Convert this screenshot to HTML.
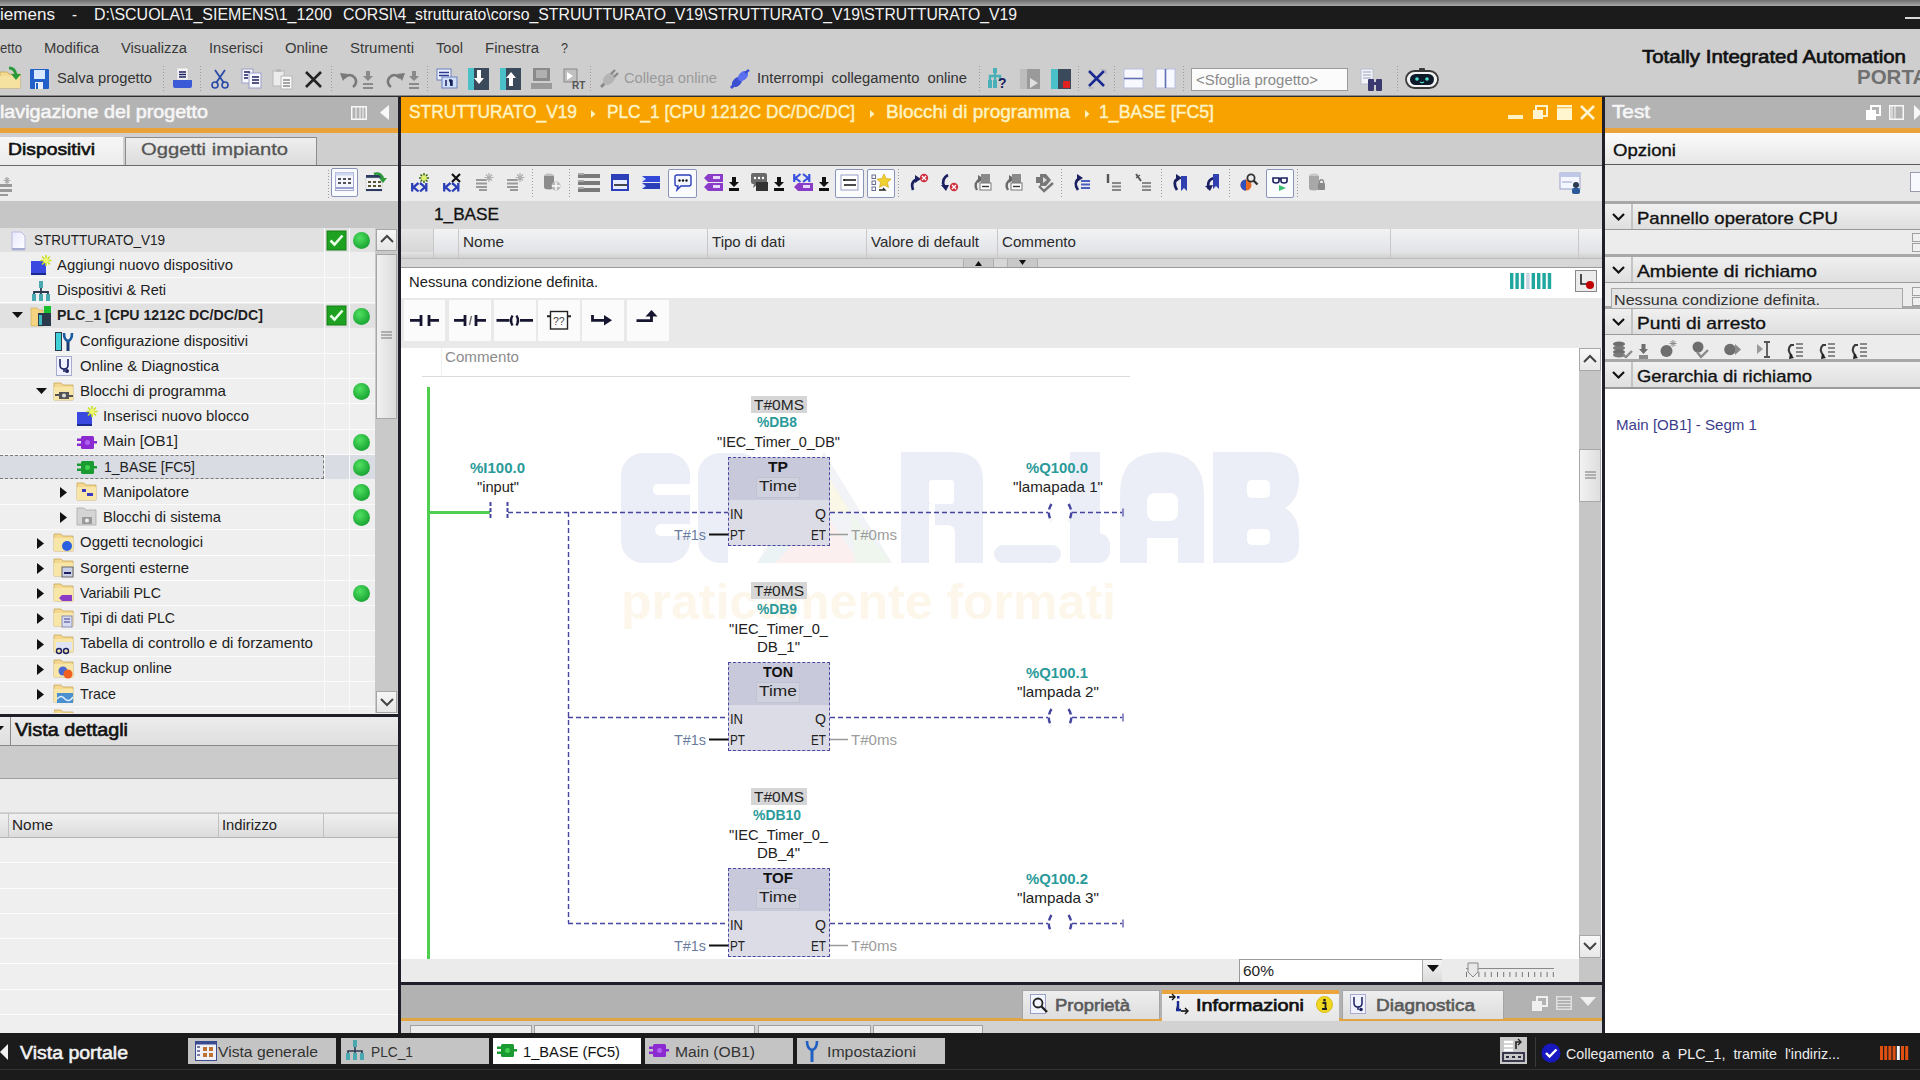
<!DOCTYPE html>
<html><head><meta charset="utf-8">
<style>
*{margin:0;padding:0;box-sizing:border-box}
html,body{width:1920px;height:1080px;overflow:hidden;background:#d4d4d4;font-family:"Liberation Sans",sans-serif;position:relative}
.a{position:absolute}
.t{position:absolute;white-space:pre;line-height:1;transform-origin:0 0}
svg.a{overflow:visible}
</style></head><body>
<div class="a" style="left:0px;top:0px;width:1920px;height:6px;background:linear-gradient(#6e6e6e,#a9a9a9);"></div>
<div class="a" style="left:0px;top:6px;width:1920px;height:23px;background:#1b1b1b;"></div>
<div class="t" style="left:0.00px;transform:scaleX(1.0165);top:7.28px;font-size:16.8px;color:#f2f2f2;">iemens</div>
<div class="t" style="left:72.00px;transform:scaleX(0.8939);top:7.28px;font-size:16.8px;color:#f2f2f2;">-</div>
<div class="t" style="left:94.00px;transform:scaleX(0.9521);top:7.28px;font-size:16.8px;color:#f2f2f2;">D:\SCUOLA\1_SIEMENS\1_1200</div>
<div class="t" style="left:343.00px;transform:scaleX(0.9431);top:7.28px;font-size:16.8px;color:#f2f2f2;">CORSI\4_strutturato\corso_STRUUTTURATO_V19</div>
<div class="t" style="left:703.00px;transform:scaleX(0.9388);top:7.28px;font-size:16.8px;color:#f2f2f2;">\STRUTTURATO_V19\STRUTTURATO_V19</div>
<div class="a" style="left:1905px;top:17px;width:15px;height:2px;background:#d8d8d8;"></div>
<div class="a" style="left:0px;top:29px;width:1920px;height:67px;background:#cecece;"></div>
<div class="a" style="left:0px;top:95px;width:1920px;height:1px;background:#8a8a8a;"></div>
<div class="a" style="left:0px;top:96px;width:1920px;height:1px;background:#2e2e2e;"></div>
<div class="t" style="left:0.00px;transform:scaleX(0.8508);top:40.38px;font-size:15.5px;color:#3a3a3a;">etto</div>
<div class="t" style="left:44.00px;transform:scaleX(0.9529);top:40.38px;font-size:15.5px;color:#3a3a3a;">Modifica</div>
<div class="t" style="left:121.00px;transform:scaleX(0.9494);top:40.38px;font-size:15.5px;color:#3a3a3a;">Visualizza</div>
<div class="t" style="left:209.00px;transform:scaleX(0.9497);top:40.38px;font-size:15.5px;color:#3a3a3a;">Inserisci</div>
<div class="t" style="left:285.00px;transform:scaleX(0.9596);top:40.38px;font-size:15.5px;color:#3a3a3a;">Online</div>
<div class="t" style="left:350.00px;transform:scaleX(0.9647);top:40.38px;font-size:15.5px;color:#3a3a3a;">Strumenti</div>
<div class="t" style="left:436.00px;transform:scaleX(0.9495);top:40.38px;font-size:15.5px;color:#3a3a3a;">Tool</div>
<div class="t" style="left:485.00px;transform:scaleX(0.9643);top:40.38px;font-size:15.5px;color:#3a3a3a;">Finestra</div>
<div class="t" style="left:561.00px;transform:scaleX(0.8116);top:40.38px;font-size:15.5px;color:#3a3a3a;">?</div>
<div class="t" style="left:1642.00px;transform:scaleX(1.1064);top:47.84px;font-size:18.5px;color:#111;-webkit-text-stroke:0.65px #111;">Totally Integrated Automation</div>
<div class="t" style="left:1857px;top:67.15px;font-size:20.5px;color:#707070;font-weight:bold;">PORTAL</div>
<div class="t" style="left:57.00px;transform:scaleX(0.9503);top:70.38px;font-size:15.5px;color:#333;">Salva progetto</div>
<div class="t" style="left:624.00px;transform:scaleX(0.9466);top:70.38px;font-size:15.5px;color:#9a9a9a;">Collega online</div>
<div class="t" style="left:757.00px;transform:scaleX(0.9520);top:70.38px;font-size:15.5px;color:#333;">Interrompi  collegamento  online</div>
<div class="a" style="left:1191px;top:68px;width:157px;height:23px;background:#fbfbfb;border:1px solid #9a9a9a"></div>
<div class="t" style="left:1196.00px;transform:scaleX(1.0294);top:72.73px;font-size:14.5px;color:#8a8a8a;">&lt;Sfoglia progetto&gt;</div>
<div class="a" style="left:163px;top:66px;width:1px;height:27px;background:repeating-linear-gradient(#9c9c9c 0 1px,transparent 1px 3px);"></div>
<div class="a" style="left:200px;top:66px;width:1px;height:27px;background:repeating-linear-gradient(#9c9c9c 0 1px,transparent 1px 3px);"></div>
<div class="a" style="left:331px;top:66px;width:1px;height:27px;background:repeating-linear-gradient(#9c9c9c 0 1px,transparent 1px 3px);"></div>
<div class="a" style="left:427px;top:66px;width:1px;height:27px;background:repeating-linear-gradient(#9c9c9c 0 1px,transparent 1px 3px);"></div>
<div class="a" style="left:590px;top:66px;width:1px;height:27px;background:repeating-linear-gradient(#9c9c9c 0 1px,transparent 1px 3px);"></div>
<div class="a" style="left:979px;top:66px;width:1px;height:27px;background:repeating-linear-gradient(#9c9c9c 0 1px,transparent 1px 3px);"></div>
<div class="a" style="left:1078px;top:66px;width:1px;height:27px;background:repeating-linear-gradient(#9c9c9c 0 1px,transparent 1px 3px);"></div>
<div class="a" style="left:1114px;top:66px;width:1px;height:27px;background:repeating-linear-gradient(#9c9c9c 0 1px,transparent 1px 3px);"></div>
<div class="a" style="left:1183px;top:66px;width:1px;height:27px;background:repeating-linear-gradient(#9c9c9c 0 1px,transparent 1px 3px);"></div>
<div class="a" style="left:1397px;top:66px;width:1px;height:27px;background:repeating-linear-gradient(#9c9c9c 0 1px,transparent 1px 3px);"></div>
<div class="a" style="left:0px;top:97px;width:398px;height:31px;background:#b3b3b3;"></div>
<div class="t" style="left:0.00px;transform:scaleX(1.0644);top:103.34px;font-size:18.5px;color:#f6f6f6;-webkit-text-stroke:0.6px #f6f6f6;">lavigazione del progetto</div>
<div class="a" style="left:0px;top:128px;width:398px;height:5px;background:#e9a33a;"></div>
<div class="a" style="left:0px;top:133px;width:398px;height:32px;background:#cfcfcf;"></div>
<div class="a" style="left:0px;top:137px;width:123px;height:29px;background:linear-gradient(#f6f6f6,#ececec);"></div>
<div class="t" style="left:8.00px;transform:scaleX(1.1368);top:141.11px;font-size:17px;color:#111;-webkit-text-stroke:0.6px #111;">Dispositivi</div>
<div class="a" style="left:125px;top:137px;width:192px;height:28px;background:linear-gradient(#eeeeee,#dcdcdc);border:1px solid #8c8c8c;border-bottom:none"></div>
<div class="t" style="left:141.00px;transform:scaleX(1.1874);top:141.11px;font-size:17px;color:#555;-webkit-text-stroke:0.3px #555;">Oggetti impianto</div>
<div class="a" style="left:0px;top:165px;width:398px;height:1px;background:#6a6a6a;"></div>
<div class="a" style="left:0px;top:166px;width:398px;height:35px;background:#ececec;"></div>
<div class="a" style="left:0px;top:201px;width:398px;height:27px;background:#c6c6c6;"></div>
<div class="a" style="left:0px;top:228px;width:398px;height:486px;background:#efefef;"></div>
<div class="a" style="left:0px;top:228px;width:375px;height:24px;background:#e1e1e1;"></div>
<div class="t" style="left:34.00px;transform:scaleX(0.9326);top:232.73px;font-size:14.5px;color:#1e1e1e;">STRUTTURATO_V19</div>
<div class="a" style="left:0px;top:277px;width:375px;height:1px;background:#fbfbfb;"></div>
<div class="t" style="left:57.00px;transform:scaleX(1.0250);top:257.95px;font-size:14.5px;color:#1e1e1e;">Aggiungi nuovo dispositivo</div>
<div class="a" style="left:0px;top:302px;width:375px;height:1px;background:#fbfbfb;"></div>
<div class="t" style="left:57.00px;transform:scaleX(1.0020);top:283.17px;font-size:14.5px;color:#1e1e1e;">Dispositivi &amp; Reti</div>
<div class="a" style="left:0px;top:304px;width:375px;height:24px;background:#e1e1e1;"></div>
<div class="t" style="left:57.00px;transform:scaleX(0.9758);top:308.39px;font-size:14.5px;color:#1e1e1e;font-weight:bold;">PLC_1 [CPU 1212C DC/DC/DC]</div>
<div class="a" style="left:0px;top:353px;width:375px;height:1px;background:#fbfbfb;"></div>
<div class="t" style="left:80.00px;transform:scaleX(1.0218);top:333.61px;font-size:14.5px;color:#1e1e1e;">Configurazione dispositivi</div>
<div class="a" style="left:0px;top:378px;width:375px;height:1px;background:#fbfbfb;"></div>
<div class="t" style="left:80.00px;transform:scaleX(1.0264);top:358.83px;font-size:14.5px;color:#1e1e1e;">Online &amp; Diagnostica</div>
<div class="a" style="left:0px;top:403px;width:375px;height:1px;background:#fbfbfb;"></div>
<div class="t" style="left:80.00px;transform:scaleX(1.0411);top:384.05px;font-size:14.5px;color:#1e1e1e;">Blocchi di programma</div>
<div class="a" style="left:0px;top:429px;width:375px;height:1px;background:#fbfbfb;"></div>
<div class="t" style="left:103.00px;transform:scaleX(1.0233);top:409.27px;font-size:14.5px;color:#1e1e1e;">Inserisci nuovo blocco</div>
<div class="a" style="left:0px;top:454px;width:375px;height:1px;background:#fbfbfb;"></div>
<div class="t" style="left:103.00px;transform:scaleX(1.0340);top:434.49px;font-size:14.5px;color:#1e1e1e;">Main [OB1]</div>
<div class="a" style="left:0px;top:455px;width:375px;height:24px;background:#d9dce2;"></div>
<div class="a" style="left:0px;top:455px;width:324px;height:24px;background:transparent;border:1px dashed #7a7a7a;border-left:none"></div>
<div class="t" style="left:104.00px;transform:scaleX(0.9650);top:459.71px;font-size:14.5px;color:#1e1e1e;">1_BASE [FC5]</div>
<div class="a" style="left:0px;top:504px;width:375px;height:1px;background:#fbfbfb;"></div>
<div class="t" style="left:103.00px;transform:scaleX(1.0259);top:484.93px;font-size:14.5px;color:#1e1e1e;">Manipolatore</div>
<div class="a" style="left:0px;top:529px;width:375px;height:1px;background:#fbfbfb;"></div>
<div class="t" style="left:103.00px;transform:scaleX(1.0168);top:510.15px;font-size:14.5px;color:#1e1e1e;">Blocchi di sistema</div>
<div class="a" style="left:0px;top:555px;width:375px;height:1px;background:#fbfbfb;"></div>
<div class="t" style="left:80.00px;transform:scaleX(1.0310);top:535.37px;font-size:14.5px;color:#1e1e1e;">Oggetti tecnologici</div>
<div class="a" style="left:0px;top:580px;width:375px;height:1px;background:#fbfbfb;"></div>
<div class="t" style="left:80.00px;transform:scaleX(1.0244);top:560.59px;font-size:14.5px;color:#1e1e1e;">Sorgenti esterne</div>
<div class="a" style="left:0px;top:605px;width:375px;height:1px;background:#fbfbfb;"></div>
<div class="t" style="left:80.00px;transform:scaleX(0.9789);top:585.81px;font-size:14.5px;color:#1e1e1e;">Variabili PLC</div>
<div class="a" style="left:0px;top:630px;width:375px;height:1px;background:#fbfbfb;"></div>
<div class="t" style="left:80.00px;transform:scaleX(0.9714);top:611.03px;font-size:14.5px;color:#1e1e1e;">Tipi di dati PLC</div>
<div class="a" style="left:0px;top:656px;width:375px;height:1px;background:#fbfbfb;"></div>
<div class="t" style="left:80.00px;transform:scaleX(1.0398);top:636.25px;font-size:14.5px;color:#1e1e1e;">Tabella di controllo e di forzamento</div>
<div class="a" style="left:0px;top:681px;width:375px;height:1px;background:#fbfbfb;"></div>
<div class="t" style="left:80.00px;transform:scaleX(1.0099);top:661.47px;font-size:14.5px;color:#1e1e1e;">Backup online</div>
<div class="a" style="left:0px;top:706px;width:375px;height:1px;background:#fbfbfb;"></div>
<div class="t" style="left:80.00px;transform:scaleX(0.9855);top:686.69px;font-size:14.5px;color:#1e1e1e;">Trace</div>
<div class="a" style="left:0px;top:731px;width:375px;height:1px;background:#fbfbfb;"></div>
<div class="a" style="left:324px;top:228px;width:1px;height:485px;background:#fafafa;"></div>
<div class="a" style="left:349px;top:228px;width:1px;height:485px;background:#fafafa;"></div>
<div class="a" style="left:0px;top:711px;width:375px;height:2px;background:#efefef;"></div>
<div class="a" style="left:375px;top:228px;width:23px;height:485px;background:#c9c9c9;"></div>
<div class="a" style="left:376px;top:229px;width:21px;height:22px;background:linear-gradient(#f6f6f6,#e6e6e6);border:1px solid #a6a6a6"></div>
<div class="a" style="left:376px;top:254px;width:21px;height:165px;background:linear-gradient(90deg,#f0f0f0,#dcdcdc);border:1px solid #a6a6a6"></div>
<div class="a" style="left:376px;top:691px;width:21px;height:22px;background:linear-gradient(#f6f6f6,#e6e6e6);border:1px solid #a6a6a6"></div>
<div class="a" style="left:0px;top:714px;width:398px;height:3px;background:#1f1f2a;"></div>
<div class="a" style="left:0px;top:717px;width:398px;height:29px;background:linear-gradient(#ececec,#dedede);"></div>
<div class="a" style="left:10px;top:717px;width:1px;height:28px;background:#8a8a8a;"></div>
<svg class="a" style="left:0px;top:726px;" width="4" height="5" viewBox="0 0 4 5"><path d="M-3 0 h7 l-3.5 4 Z" fill="#111"/></svg>
<div class="t" style="left:15.00px;transform:scaleX(1.1312);top:722.19px;font-size:17.5px;color:#111;-webkit-text-stroke:0.6px #111;">Vista dettagli</div>
<div class="a" style="left:0px;top:745px;width:398px;height:1px;background:#8a8a8a;"></div>
<div class="a" style="left:0px;top:746px;width:398px;height:33px;background:#cbcbcb;"></div>
<div class="a" style="left:0px;top:778px;width:398px;height:1px;background:#a0a0a0;"></div>
<div class="a" style="left:0px;top:779px;width:398px;height:33px;background:#ececec;"></div>
<div class="a" style="left:0px;top:813px;width:398px;height:25px;background:linear-gradient(#f0f0f0,#dcdcdc);border-top:1px solid #c8c8c8;border-bottom:1px solid #b4b4b4"></div>
<div class="a" style="left:8px;top:813px;width:1px;height:25px;background:#c0c0c0;"></div>
<div class="a" style="left:218px;top:813px;width:1px;height:25px;background:#c0c0c0;"></div>
<div class="a" style="left:323px;top:813px;width:1px;height:25px;background:#c0c0c0;"></div>
<div class="t" style="left:12.00px;transform:scaleX(1.0598);top:818.23px;font-size:14.5px;color:#222;">Nome</div>
<div class="t" style="left:222.00px;transform:scaleX(1.0185);top:818.23px;font-size:14.5px;color:#222;">Indirizzo</div>
<div class="a" style="left:0px;top:838px;width:398px;height:195px;background:#efefef;"></div>
<div class="a" style="left:0px;top:862px;width:398px;height:1px;background:#fbfbfb;"></div>
<div class="a" style="left:0px;top:888px;width:398px;height:1px;background:#fbfbfb;"></div>
<div class="a" style="left:0px;top:913px;width:398px;height:1px;background:#fbfbfb;"></div>
<div class="a" style="left:0px;top:938px;width:398px;height:1px;background:#fbfbfb;"></div>
<div class="a" style="left:0px;top:963px;width:398px;height:1px;background:#fbfbfb;"></div>
<div class="a" style="left:0px;top:989px;width:398px;height:1px;background:#fbfbfb;"></div>
<div class="a" style="left:0px;top:1014px;width:398px;height:1px;background:#fbfbfb;"></div>
<div class="a" style="left:398px;top:97px;width:3px;height:936px;background:#1f1f2a;"></div>
<div class="a" style="left:401px;top:97px;width:1201px;height:36px;background:#f8a200;"></div>
<div class="a" style="left:401px;top:133px;width:1201px;height:32px;background:#cdcdcd;"></div>
<div class="a" style="left:401px;top:165px;width:1201px;height:1px;background:#6a6a6a;"></div>
<div class="a" style="left:401px;top:166px;width:1201px;height:35px;background:#ececec;"></div>
<div class="a" style="left:401px;top:201px;width:1201px;height:28px;background:#d9d9d9;"></div>
<div class="t" style="left:434.00px;transform:scaleX(1.0421);top:206.03px;font-size:16.5px;color:#111;-webkit-text-stroke:0.3px #111;">1_BASE</div>
<div class="a" style="left:401px;top:229px;width:1201px;height:23px;background:linear-gradient(#f2f3f5,#e1e3e6);"></div>
<div class="a" style="left:401px;top:229px;width:32px;height:29px;background:linear-gradient(#e6e6e6,#d2d2d2);"></div>
<div class="a" style="left:401px;top:252px;width:1201px;height:6px;background:linear-gradient(#e4e4e4,#d0d0d0);"></div>
<div class="a" style="left:433px;top:229px;width:1px;height:29px;background:#c8c8c8;"></div>
<div class="a" style="left:458px;top:229px;width:1px;height:29px;background:#c8c8c8;"></div>
<div class="a" style="left:707px;top:229px;width:1px;height:29px;background:#c8c8c8;"></div>
<div class="a" style="left:866px;top:229px;width:1px;height:29px;background:#c8c8c8;"></div>
<div class="a" style="left:997px;top:229px;width:1px;height:29px;background:#c8c8c8;"></div>
<div class="a" style="left:1390px;top:229px;width:1px;height:29px;background:#c8c8c8;"></div>
<div class="a" style="left:1578px;top:229px;width:1px;height:29px;background:#c8c8c8;"></div>
<div class="t" style="left:463.00px;transform:scaleX(1.0598);top:234.73px;font-size:14.5px;color:#2a2a2a;">Nome</div>
<div class="t" style="left:712.00px;transform:scaleX(1.0371);top:234.73px;font-size:14.5px;color:#2a2a2a;">Tipo di dati</div>
<div class="t" style="left:871.00px;transform:scaleX(1.0413);top:234.73px;font-size:14.5px;color:#2a2a2a;">Valore di default</div>
<div class="t" style="left:1002.00px;transform:scaleX(1.0434);top:234.73px;font-size:14.5px;color:#2a2a2a;">Commento</div>
<div class="a" style="left:401px;top:258px;width:1201px;height:9px;background:#d7d7d7;border-top:1px solid #bcbcbc"></div>
<div class="a" style="left:963px;top:259px;width:31px;height:8px;background:#c8c8c8;border-left:1px solid #b0b0b0;border-right:1px solid #b0b0b0"></div>
<div class="a" style="left:1007px;top:259px;width:31px;height:8px;background:#c8c8c8;border-left:1px solid #b0b0b0;border-right:1px solid #b0b0b0"></div>
<svg class="a" style="left:975px;top:261px;" width="7" height="5" viewBox="0 0 7 5"><path d="M0 5 L3.5 0 L7 5 Z" fill="#111"/></svg>
<svg class="a" style="left:1019px;top:260px;" width="7" height="5" viewBox="0 0 7 5"><path d="M0 0 L3.5 5 L7 0 Z" fill="#111"/></svg>
<div class="a" style="left:401px;top:267px;width:1201px;height:1px;background:#9a9a9a;"></div>
<div class="a" style="left:401px;top:268px;width:1201px;height:30px;background:#ffffff;"></div>
<div class="t" style="left:409.00px;transform:scaleX(1.0194);top:274.73px;font-size:14.5px;color:#222;">Nessuna condizione definita.</div>
<div class="a" style="left:401px;top:298px;width:1201px;height:50px;background:#e9e9e9;"></div>
<div class="a" style="left:404px;top:300px;width:41px;height:41px;background:#fbfbfb;"></div>
<div class="a" style="left:449px;top:300px;width:42px;height:41px;background:#fbfbfb;"></div>
<div class="a" style="left:494px;top:300px;width:42px;height:41px;background:#fbfbfb;"></div>
<div class="a" style="left:538px;top:300px;width:42px;height:41px;background:#fbfbfb;"></div>
<div class="a" style="left:582px;top:300px;width:42px;height:41px;background:#fbfbfb;"></div>
<div class="a" style="left:627px;top:300px;width:42px;height:41px;background:#fbfbfb;"></div>
<div class="a" style="left:401px;top:348px;width:1201px;height:611px;background:#ffffff;"></div>
<div class="a" style="left:1579px;top:348px;width:22px;height:611px;background:#c6c6c6;"></div>
<div class="a" style="left:1579px;top:348px;width:22px;height:23px;background:linear-gradient(#f8f8f8,#e8e8e8);border:1px solid #a8a8a8"></div>
<div class="a" style="left:1579px;top:449px;width:22px;height:53px;background:linear-gradient(90deg,#f2f2f2,#dedede);border:1px solid #a8a8a8"></div>
<div class="a" style="left:1579px;top:935px;width:22px;height:23px;background:linear-gradient(#f8f8f8,#e8e8e8);border:1px solid #a8a8a8"></div>
<div class="a" style="left:401px;top:959px;width:1178px;height:23px;background:#ebebeb;"></div>
<div class="a" style="left:1579px;top:959px;width:22px;height:23px;background:#c6c6c6;"></div>
<div class="a" style="left:1239px;top:959px;width:203px;height:23px;background:#ffffff;border:1px solid #9a9a9a;border-bottom:none"></div>
<div class="t" style="left:1243.00px;transform:scaleX(1.0678);top:963.73px;font-size:14.5px;color:#222;">60%</div>
<div class="a" style="left:1422px;top:960px;width:20px;height:22px;background:linear-gradient(#f4f4f4,#dadada);border-left:1px solid #a8a8a8"></div>
<div class="a" style="left:401px;top:982px;width:1201px;height:3px;background:#1f1f2a;"></div>
<div class="a" style="left:401px;top:985px;width:1201px;height:33px;background:#b2b2b2;"></div>
<div class="a" style="left:401px;top:1018px;width:1201px;height:3px;background:#e1a443;"></div>
<div class="a" style="left:401px;top:1021px;width:1201px;height:12px;background:#d2d2d2;"></div>
<div class="a" style="left:410px;top:1025px;width:122px;height:8px;background:#ececec;border:1px solid #a0a0a0;border-bottom:none"></div>
<div class="a" style="left:534px;top:1025px;width:221px;height:8px;background:#ececec;border:1px solid #a0a0a0;border-bottom:none"></div>
<div class="a" style="left:758px;top:1025px;width:113px;height:8px;background:#ececec;border:1px solid #a0a0a0;border-bottom:none"></div>
<div class="a" style="left:873px;top:1025px;width:110px;height:8px;background:#ececec;border:1px solid #a0a0a0;border-bottom:none"></div>
<div class="a" style="left:1022px;top:990px;width:138px;height:29px;background:linear-gradient(#eeeeee,#dddddd);border:1px solid #a4a4a4;border-bottom:none"></div>
<div class="a" style="left:1162px;top:990px;width:177px;height:31px;background:linear-gradient(#f2f2f2,#e6e6e6);border-top:4px solid #e9a43e"></div>
<div class="a" style="left:1342px;top:990px;width:162px;height:29px;background:linear-gradient(#eeeeee,#dddddd);border:1px solid #a4a4a4;border-bottom:none"></div>
<div class="t" style="left:1055.00px;transform:scaleX(1.0872);top:996.61px;font-size:17px;color:#5a5a5a;-webkit-text-stroke:0.6px #5a5a5a;">Proprietà</div>
<div class="t" style="left:1196.00px;transform:scaleX(1.1662);top:996.61px;font-size:17px;color:#111;-webkit-text-stroke:0.7px #111;">Informazioni</div>
<div class="t" style="left:1376.00px;transform:scaleX(1.1145);top:996.61px;font-size:17px;color:#5a5a5a;-webkit-text-stroke:0.6px #5a5a5a;">Diagnostica</div>
<div class="a" style="left:1602px;top:97px;width:3px;height:936px;background:#1f1f2a;"></div>
<div class="t" style="left:409.00px;transform:scaleX(0.9374);top:103.34px;font-size:18.5px;color:#fff3c4;-webkit-text-stroke:0.45px #fff3c4;">STRUTTURATO_V19</div>
<div class="t" style="left:607.00px;transform:scaleX(0.9313);top:103.34px;font-size:18.5px;color:#fff3c4;-webkit-text-stroke:0.45px #fff3c4;">PLC_1 [CPU 1212C DC/DC/DC]</div>
<div class="t" style="left:886.00px;transform:scaleX(1.0285);top:103.34px;font-size:18.5px;color:#fff3c4;-webkit-text-stroke:0.45px #fff3c4;">Blocchi di programma</div>
<div class="t" style="left:1099.00px;transform:scaleX(0.9558);top:103.34px;font-size:18.5px;color:#fff3c4;-webkit-text-stroke:0.45px #fff3c4;">1_BASE [FC5]</div>
<svg class="a" style="left:591px;top:110px;" width="5" height="8" viewBox="0 0 5 8"><path d="M0 0 L4.5 4 L0 8 Z" fill="#fff3c4"/></svg>
<svg class="a" style="left:870px;top:110px;" width="5" height="8" viewBox="0 0 5 8"><path d="M0 0 L4.5 4 L0 8 Z" fill="#fff3c4"/></svg>
<svg class="a" style="left:1085px;top:110px;" width="5" height="8" viewBox="0 0 5 8"><path d="M0 0 L4.5 4 L0 8 Z" fill="#fff3c4"/></svg>
<div class="a" style="left:1508px;top:115px;width:15px;height:4px;background:#fff3c4;"></div>
<svg class="a" style="left:1532px;top:105px;" width="16" height="15" viewBox="0 0 16 15"><rect x="4" y="1" width="11" height="10" fill="none" stroke="#fff4cf" stroke-width="2"/><rect x="1" y="5" width="10" height="9" fill="#fff4cf"/></svg>
<svg class="a" style="left:1557px;top:105px;" width="15" height="15" viewBox="0 0 15 15"><rect x="0" y="0" width="15" height="15" fill="#fff6d0"/><rect x="0" y="2" width="15" height="1.3" fill="#f8a200" opacity="0.6"/></svg>
<svg class="a" style="left:1580px;top:105px;" width="15" height="15" viewBox="0 0 15 15"><path d="M1 1 L14 14 M14 1 L1 14" stroke="#fff4cf" stroke-width="2.6"/></svg>
<div class="a" style="left:441px;top:348px;width:1px;height:28px;background:#f0f0f0;"></div>
<div class="t" style="left:445.00px;transform:scaleX(1.0808);top:350.15px;font-size:14px;color:#8c8c8c;">Commento</div>
<div class="a" style="left:422px;top:376px;width:708px;height:1px;background:#dcdcdc;"></div>
<svg class="a" style="left:0;top:0" width="1920" height="1080"><rect x="621" y="453" width="69" height="110" rx="22" fill="#ebeef6"/><rect x="653" y="484" width="40" height="11" rx="5" fill="#ffffff"/><rect x="655" y="524" width="38" height="12" rx="6" fill="#ffffff"/><rect x="698" y="453" width="64" height="110" rx="22" fill="#ebeef6"/><rect x="728" y="484" width="36" height="11" rx="5" fill="#ffffff"/><rect x="728" y="520" width="36" height="45" rx="0" fill="#ffffff"/><path d="M824 452 L892 563 L757 563 Z" fill="#f1f3f6"/><path d="M824 470 L850 512 L798 512 Z" fill="#fbf7e6"/><path d="M798 512 L824 512 L780 563 L757 563 Z" fill="#ebf3f5"/><path d="M775 563 L824 512 L860 563 Z" fill="#fbeff0"/><path d="M850 512 L892 563 L855 563 Z" fill="#eef6ee"/><path d="M901 452 H952 Q983 452 983 480 V563 H901 Z" fill="#ebeef6"/><rect x="929" y="480" width="25" height="24" rx="3" fill="#ffffff"/><rect x="929" y="504" width="6" height="60" rx="0" fill="#ffffff"/><path d="M929 525 H947 Q955 525 955 533 V564 H929 Z" fill="#ffffff"/><rect x="994" y="545" width="67" height="18" rx="9" fill="#ebeef6"/><rect x="1070" y="452" width="30" height="111" rx="0" fill="#ebeef6"/><rect x="1070" y="533" width="40" height="30" rx="12" fill="#ebeef6"/><path d="M1120 563 L1120 494 Q1120 452 1162 452 Q1204 452 1204 494 L1204 563 Z" fill="#ebeef6"/><rect x="1147" y="493" width="31" height="28" rx="8" fill="#ffffff"/><rect x="1147" y="538" width="31" height="26" rx="0" fill="#ffffff"/><path d="M1213 452 h55 q31 0 31 28 q0 20 -14 28 q14 8 14 28 v10 q0 17 -20 17 h-66 Z" fill="#ebeef6"/><rect x="1247" y="480" width="23" height="18" rx="5" fill="#ffffff"/><rect x="1247" y="529" width="23" height="16" rx="5" fill="#ffffff"/></svg>
<div class="t" style="left:621.00px;transform:scaleX(1.0008);top:576.67px;font-size:50px;color:#fdf6ea;font-weight:bold;">praticamente formati</div>
<div class="a" style="left:427px;top:387px;width:3px;height:572px;background:#4fcf4f;"></div>
<div class="a" style="left:429px;top:511px;width:61px;height:3px;background:#4fcf4f;"></div>
<svg class="a" style="left:0;top:0" width="1920" height="1080"><line x1="490.5" y1="502" x2="490.5" y2="520" stroke="#4646a0" stroke-width="2" stroke-dasharray="4 2"/><line x1="507.5" y1="502" x2="507.5" y2="520" stroke="#4646a0" stroke-width="2" stroke-dasharray="4 2"/><line x1="508" y1="512.5" x2="728" y2="512.5" stroke="#4646a0" stroke-width="1.4" stroke-dasharray="5 3"/><line x1="568.5" y1="512" x2="568.5" y2="923" stroke="#4646a0" stroke-width="1.4" stroke-dasharray="5 3"/><line x1="568" y1="717.5" x2="728" y2="717.5" stroke="#4646a0" stroke-width="1.4" stroke-dasharray="5 3"/><line x1="568" y1="923.5" x2="728" y2="923.5" stroke="#4646a0" stroke-width="1.4" stroke-dasharray="5 3"/><line x1="830" y1="512.5" x2="1048" y2="512.5" stroke="#4646a0" stroke-width="1.4" stroke-dasharray="5 3"/><line x1="1072" y1="512.5" x2="1122" y2="512.5" stroke="#4646a0" stroke-width="1.4" stroke-dasharray="5 3"/><line x1="1123" y1="508.5" x2="1123" y2="516.5" stroke="#4646a0" stroke-width="1.2"/><path d="M1051.5 504.0 Q1046 512.5 1051.5 521.0" fill="none" stroke="#4646a0" stroke-width="2.4" stroke-dasharray="6 3"/><path d="M1068.5 504.0 Q1074 512.5 1068.5 521.0" fill="none" stroke="#4646a0" stroke-width="2.4" stroke-dasharray="6 3"/><line x1="709" y1="534.5" x2="728" y2="534.5" stroke="#111" stroke-width="2"/><line x1="830" y1="534.5" x2="848" y2="534.5" stroke="#9a9a9a" stroke-width="1.5"/><line x1="830" y1="717.5" x2="1048" y2="717.5" stroke="#4646a0" stroke-width="1.4" stroke-dasharray="5 3"/><line x1="1072" y1="717.5" x2="1122" y2="717.5" stroke="#4646a0" stroke-width="1.4" stroke-dasharray="5 3"/><line x1="1123" y1="713.5" x2="1123" y2="721.5" stroke="#4646a0" stroke-width="1.2"/><path d="M1051.5 709.0 Q1046 717.5 1051.5 726.0" fill="none" stroke="#4646a0" stroke-width="2.4" stroke-dasharray="6 3"/><path d="M1068.5 709.0 Q1074 717.5 1068.5 726.0" fill="none" stroke="#4646a0" stroke-width="2.4" stroke-dasharray="6 3"/><line x1="709" y1="739.5" x2="728" y2="739.5" stroke="#111" stroke-width="2"/><line x1="830" y1="739.5" x2="848" y2="739.5" stroke="#9a9a9a" stroke-width="1.5"/><line x1="830" y1="923.5" x2="1048" y2="923.5" stroke="#4646a0" stroke-width="1.4" stroke-dasharray="5 3"/><line x1="1072" y1="923.5" x2="1122" y2="923.5" stroke="#4646a0" stroke-width="1.4" stroke-dasharray="5 3"/><line x1="1123" y1="919.5" x2="1123" y2="927.5" stroke="#4646a0" stroke-width="1.2"/><path d="M1051.5 915.0 Q1046 923.5 1051.5 932.0" fill="none" stroke="#4646a0" stroke-width="2.4" stroke-dasharray="6 3"/><path d="M1068.5 915.0 Q1074 923.5 1068.5 932.0" fill="none" stroke="#4646a0" stroke-width="2.4" stroke-dasharray="6 3"/><line x1="709" y1="945.5" x2="728" y2="945.5" stroke="#111" stroke-width="2"/><line x1="830" y1="945.5" x2="848" y2="945.5" stroke="#9a9a9a" stroke-width="1.5"/></svg>
<div class="a" style="left:751px;top:396px;width:56px;height:17px;background:#d6d6d6;"></div>
<div class="t" style="left:754.00px;transform:scaleX(1.1080);top:397.85px;font-size:14px;color:#262626;">T#0MS</div>
<div class="t" style="left:757.00px;transform:scaleX(0.9545);top:415.03px;font-size:14.5px;color:#2a9a9a;font-weight:bold;">%DB8</div>
<div class="t" style="left:716.50px;transform:scaleX(0.9968);top:435.13px;font-size:14.5px;color:#222;">"IEC_Timer_0_DB"</div>
<div class="a" style="left:728px;top:457px;width:102px;height:89px;background:linear-gradient(#c8c9da 0 42px,#dcdce6 42px);border:1.5px dashed #4a4aa0"></div>
<div class="t" style="left:768.00px;transform:scaleX(1.0793);top:459.73px;font-size:14.5px;color:#111;font-weight:bold;">TP</div>
<div class="a" style="left:756px;top:477px;width:44px;height:21px;background:#d0d1de;border:1px solid #c2c3d2"></div>
<div class="t" style="left:759.00px;transform:scaleX(1.1992);top:479.23px;font-size:14.5px;color:#222;">Time</div>
<div class="t" style="left:730.00px;transform:scaleX(0.9286);top:506.65px;font-size:14px;color:#222;">IN</div>
<div class="t" style="left:730.00px;transform:scaleX(0.8384);top:527.65px;font-size:14px;color:#222;">PT</div>
<div class="t" style="left:815.00px;transform:scaleX(1.0100);top:506.65px;font-size:14px;color:#222;">Q</div>
<div class="t" style="left:811.00px;transform:scaleX(0.8384);top:527.65px;font-size:14px;color:#222;">ET</div>
<div class="t" style="left:674.00px;transform:scaleX(1.0281);top:527.65px;font-size:14px;color:#6a7ca0;">T#1s</div>
<div class="t" style="left:851.00px;transform:scaleX(1.0748);top:527.65px;font-size:14px;color:#9c9c9c;">T#0ms</div>
<div class="t" style="left:1026.00px;transform:scaleX(1.0253);top:461.43px;font-size:14.5px;color:#2a9a9a;font-weight:bold;">%Q100.0</div>
<div class="t" style="left:1013.00px;transform:scaleX(1.0456);top:480.33px;font-size:14.5px;color:#222;">"lamapada 1"</div>
<div class="a" style="left:751px;top:582px;width:56px;height:17px;background:#d6d6d6;"></div>
<div class="t" style="left:754.00px;transform:scaleX(1.1080);top:584.05px;font-size:14px;color:#262626;">T#0MS</div>
<div class="t" style="left:757.00px;transform:scaleX(0.9545);top:601.73px;font-size:14.5px;color:#2a9a9a;font-weight:bold;">%DB9</div>
<div class="t" style="left:728.50px;transform:scaleX(1.0092);top:622.23px;font-size:14.5px;color:#222;">"IEC_Timer_0_</div>
<div class="t" style="left:756.50px;transform:scaleX(1.0381);top:639.73px;font-size:14.5px;color:#222;">DB_1"</div>
<div class="a" style="left:728px;top:662px;width:102px;height:89px;background:linear-gradient(#c8c9da 0 42px,#dcdce6 42px);border:1.5px dashed #4a4aa0"></div>
<div class="t" style="left:763.00px;transform:scaleX(0.9882);top:664.73px;font-size:14.5px;color:#111;font-weight:bold;">TON</div>
<div class="a" style="left:756px;top:682px;width:44px;height:21px;background:#d0d1de;border:1px solid #c2c3d2"></div>
<div class="t" style="left:759.00px;transform:scaleX(1.1992);top:684.23px;font-size:14.5px;color:#222;">Time</div>
<div class="t" style="left:730.00px;transform:scaleX(0.9286);top:711.65px;font-size:14px;color:#222;">IN</div>
<div class="t" style="left:730.00px;transform:scaleX(0.8384);top:732.65px;font-size:14px;color:#222;">PT</div>
<div class="t" style="left:815.00px;transform:scaleX(1.0100);top:711.65px;font-size:14px;color:#222;">Q</div>
<div class="t" style="left:811.00px;transform:scaleX(0.8384);top:732.65px;font-size:14px;color:#222;">ET</div>
<div class="t" style="left:674.00px;transform:scaleX(1.0281);top:732.65px;font-size:14px;color:#6a7ca0;">T#1s</div>
<div class="t" style="left:851.00px;transform:scaleX(1.0748);top:732.65px;font-size:14px;color:#9c9c9c;">T#0ms</div>
<div class="t" style="left:1026.00px;transform:scaleX(1.0253);top:666.43px;font-size:14.5px;color:#2a9a9a;font-weight:bold;">%Q100.1</div>
<div class="t" style="left:1017.00px;transform:scaleX(1.0511);top:685.33px;font-size:14.5px;color:#222;">"lampada 2"</div>
<div class="a" style="left:751px;top:788px;width:56px;height:17px;background:#d6d6d6;"></div>
<div class="t" style="left:754.00px;transform:scaleX(1.1080);top:790.05px;font-size:14px;color:#262626;">T#0MS</div>
<div class="t" style="left:753.00px;transform:scaleX(0.9606);top:807.73px;font-size:14.5px;color:#2a9a9a;font-weight:bold;">%DB10</div>
<div class="t" style="left:728.50px;transform:scaleX(1.0092);top:828.23px;font-size:14.5px;color:#222;">"IEC_Timer_0_</div>
<div class="t" style="left:756.50px;transform:scaleX(1.0381);top:845.73px;font-size:14.5px;color:#222;">DB_4"</div>
<div class="a" style="left:728px;top:868px;width:102px;height:89px;background:linear-gradient(#c8c9da 0 42px,#dcdce6 42px);border:1.5px dashed #4a4aa0"></div>
<div class="t" style="left:763.00px;transform:scaleX(1.0440);top:870.73px;font-size:14.5px;color:#111;font-weight:bold;">TOF</div>
<div class="a" style="left:756px;top:888px;width:44px;height:21px;background:#d0d1de;border:1px solid #c2c3d2"></div>
<div class="t" style="left:759.00px;transform:scaleX(1.1992);top:890.23px;font-size:14.5px;color:#222;">Time</div>
<div class="t" style="left:730.00px;transform:scaleX(0.9286);top:917.65px;font-size:14px;color:#222;">IN</div>
<div class="t" style="left:730.00px;transform:scaleX(0.8384);top:938.65px;font-size:14px;color:#222;">PT</div>
<div class="t" style="left:815.00px;transform:scaleX(1.0100);top:917.65px;font-size:14px;color:#222;">Q</div>
<div class="t" style="left:811.00px;transform:scaleX(0.8384);top:938.65px;font-size:14px;color:#222;">ET</div>
<div class="t" style="left:674.00px;transform:scaleX(1.0281);top:938.65px;font-size:14px;color:#6a7ca0;">T#1s</div>
<div class="t" style="left:851.00px;transform:scaleX(1.0748);top:938.65px;font-size:14px;color:#9c9c9c;">T#0ms</div>
<div class="t" style="left:1026.00px;transform:scaleX(1.0253);top:872.43px;font-size:14.5px;color:#2a9a9a;font-weight:bold;">%Q100.2</div>
<div class="t" style="left:1017.00px;transform:scaleX(1.0511);top:891.33px;font-size:14.5px;color:#222;">"lampada 3"</div>
<div class="t" style="left:469.50px;transform:scaleX(1.0335);top:461.33px;font-size:14.5px;color:#2a9a9a;font-weight:bold;">%I100.0</div>
<div class="t" style="left:476.50px;transform:scaleX(1.0060);top:480.33px;font-size:14.5px;color:#222;">"input"</div>
<div class="a" style="left:1605px;top:97px;width:315px;height:31px;background:#b3b3b3;"></div>
<div class="t" style="left:1612.00px;transform:scaleX(1.1197);top:103.34px;font-size:18.5px;color:#f6f6f6;-webkit-text-stroke:0.6px #f6f6f6;">Test</div>
<div class="a" style="left:1605px;top:128px;width:315px;height:5px;background:#e9a33a;"></div>
<div class="a" style="left:1605px;top:133px;width:315px;height:31px;background:linear-gradient(#fbfbfb,#e6e6e6);"></div>
<div class="t" style="left:1613.00px;transform:scaleX(1.0930);top:141.61px;font-size:17px;color:#111;-webkit-text-stroke:0.35px #111;">Opzioni</div>
<div class="a" style="left:1605px;top:164px;width:315px;height:1px;background:#5a5a5a;"></div>
<div class="a" style="left:1605px;top:165px;width:315px;height:36px;background:#e7e7e7;"></div>
<div class="a" style="left:1910px;top:172px;width:10px;height:20px;background:#f8f8ff;border:1px solid #9a9ab0;border-right:none"></div>
<div class="a" style="left:1605px;top:201px;width:315px;height:3px;background:#a8a8a8;"></div>
<div class="a" style="left:1605px;top:204px;width:315px;height:26px;background:linear-gradient(#f0f0f0,#dedede);"></div>
<div class="a" style="left:1631px;top:204px;width:2px;height:26px;background:#c4c4c4;"></div>
<div class="a" style="left:1605px;top:229px;width:315px;height:2px;background:#9a9a9a;"></div>
<div class="t" style="left:1637.00px;transform:scaleX(1.0907);top:209.61px;font-size:17px;color:#111;-webkit-text-stroke:0.35px #111;">Pannello operatore CPU</div>
<div class="a" style="left:1605px;top:254px;width:315px;height:3px;background:#a8a8a8;"></div>
<div class="a" style="left:1605px;top:257px;width:315px;height:26px;background:linear-gradient(#f0f0f0,#dedede);"></div>
<div class="a" style="left:1631px;top:257px;width:2px;height:26px;background:#c4c4c4;"></div>
<div class="a" style="left:1605px;top:282px;width:315px;height:2px;background:#9a9a9a;"></div>
<div class="t" style="left:1637.00px;transform:scaleX(1.1339);top:262.61px;font-size:17px;color:#111;-webkit-text-stroke:0.35px #111;">Ambiente di richiamo</div>
<div class="a" style="left:1605px;top:306px;width:315px;height:3px;background:#a8a8a8;"></div>
<div class="a" style="left:1605px;top:309px;width:315px;height:26px;background:linear-gradient(#f0f0f0,#dedede);"></div>
<div class="a" style="left:1631px;top:309px;width:2px;height:26px;background:#c4c4c4;"></div>
<div class="a" style="left:1605px;top:334px;width:315px;height:2px;background:#9a9a9a;"></div>
<div class="t" style="left:1637.00px;transform:scaleX(1.1282);top:314.61px;font-size:17px;color:#111;-webkit-text-stroke:0.35px #111;">Punti di arresto</div>
<div class="a" style="left:1605px;top:359px;width:315px;height:3px;background:#a8a8a8;"></div>
<div class="a" style="left:1605px;top:362px;width:315px;height:26px;background:linear-gradient(#f0f0f0,#dedede);"></div>
<div class="a" style="left:1631px;top:362px;width:2px;height:26px;background:#c4c4c4;"></div>
<div class="a" style="left:1605px;top:387px;width:315px;height:2px;background:#9a9a9a;"></div>
<div class="t" style="left:1637.00px;transform:scaleX(1.0832);top:367.61px;font-size:17px;color:#111;-webkit-text-stroke:0.35px #111;">Gerarchia di richiamo</div>
<div class="a" style="left:1605px;top:230px;width:315px;height:24px;background:#ececec;"></div>
<div class="a" style="left:1605px;top:283px;width:315px;height:23px;background:#ececec;"></div>
<div class="a" style="left:1611px;top:288px;width:292px;height:20px;background:#e4e4e4;border:1px solid #a8a8a8;border-bottom:none"></div>
<div class="t" style="left:1614.00px;transform:scaleX(1.1507);top:293.15px;font-size:14px;color:#333;">Nessuna condizione definita.</div>
<div class="a" style="left:1605px;top:335px;width:315px;height:24px;background:#ececec;"></div>
<div class="a" style="left:1605px;top:389px;width:315px;height:644px;background:#ffffff;"></div>
<div class="t" style="left:1616.00px;transform:scaleX(1.0414);top:417.73px;font-size:14.5px;color:#3c3c8c;">Main [OB1] - Segm 1</div>
<div class="a" style="left:0px;top:1033px;width:1920px;height:47px;background:#1b1b1b;"></div>
<div class="a" style="left:0px;top:1069px;width:1920px;height:1px;background:#333;"></div>
<div class="t" style="left:20.00px;transform:scaleX(1.0829);top:1043.76px;font-size:18px;color:#f2f2f2;-webkit-text-stroke:0.55px #f2f2f2;">Vista portale</div>
<div class="a" style="left:188px;top:1038px;width:148px;height:26px;background:#c4c4c4;"></div>
<div class="t" style="left:218.00px;transform:scaleX(1.0120);top:1044.38px;font-size:15.5px;color:#333;">Vista generale</div>
<div class="a" style="left:341px;top:1038px;width:148px;height:26px;background:#c4c4c4;"></div>
<div class="t" style="left:371.00px;transform:scaleX(0.8860);top:1044.38px;font-size:15.5px;color:#333;">PLC_1</div>
<div class="a" style="left:493px;top:1038px;width:148px;height:26px;background:#ffffff;"></div>
<div class="t" style="left:523.00px;transform:scaleX(0.9462);top:1044.38px;font-size:15.5px;color:#111;">1_BASE (FC5)</div>
<div class="a" style="left:645px;top:1038px;width:148px;height:26px;background:#c4c4c4;"></div>
<div class="t" style="left:675.00px;transform:scaleX(1.0095);top:1044.38px;font-size:15.5px;color:#333;">Main (OB1)</div>
<div class="a" style="left:797px;top:1038px;width:148px;height:26px;background:#c4c4c4;"></div>
<div class="t" style="left:827.00px;transform:scaleX(1.0228);top:1044.38px;font-size:15.5px;color:#333;">Impostazioni</div>
<div class="a" style="left:1535px;top:1037px;width:1px;height:30px;background:#3a3a3a;"></div>
<div class="t" style="left:1566.00px;transform:scaleX(0.9842);top:1046.73px;font-size:14.5px;color:#ececec;">Collegamento  a  PLC_1,  tramite  l'indiriz...</div>
<svg class="a" style="left:0px;top:67px;" width="21" height="22" viewBox="0 0 21 22"><path d="M0 5 h7 l2 2 h11 v14 h-20 Z" fill="#f2d890" stroke="#c8a850" stroke-width=".8"/><rect x="0" y="9" width="20" height="12" fill="#f6e2a0"/><path d="M9 1 q6 0 7 7" fill="none" stroke="#2a9a3a" stroke-width="2.8"/><path d="M11 7 h10 l-5 6 Z" fill="#2a9a3a"/></svg>
<svg class="a" style="left:30px;top:69px;" width="19" height="20" viewBox="0 0 19 20"><rect x="0" y="0" width="19" height="20" rx="1" fill="#2060c8"/><rect x="4" y="1" width="11" height="9" fill="#d8e8ff"/><rect x="5" y="13" width="8" height="7" fill="#e8f0ff"/><rect x="6" y="14" width="2" height="6" fill="#2060c8"/></svg>
<svg class="a" style="left:172px;top:68px;" width="21" height="21" viewBox="0 0 21 21"><rect x="5" y="0" width="11" height="12" fill="#f4f4f4" stroke="#c8c8c8" stroke-width=".6"/><path d="M7 4 h7 M7 6.5 h7 M7 9 h7" stroke="#1a2060" stroke-width="1.3"/><path d="M1 12 h19 v6 q0 2 -2 2 h-15 q-2 0 -2 -2 Z" fill="#3a5ad8"/></svg>
<svg class="a" style="left:211px;top:69px;" width="18" height="20" viewBox="0 0 18 20"><path d="M4 1 l9 13 M14 1 l-9 13" stroke="#2a4aa8" stroke-width="1.8"/><circle cx="4" cy="16" r="3" fill="none" stroke="#2a4aa8" stroke-width="1.6"/><circle cx="14" cy="16" r="3" fill="none" stroke="#2a4aa8" stroke-width="1.6"/></svg>
<svg class="a" style="left:241px;top:68px;" width="21" height="21" viewBox="0 0 21 21"><rect x="1" y="1" width="11" height="14" fill="#f8f8ff" stroke="#9aa0c8"/><rect x="8" y="5" width="12" height="15" fill="#f8f8ff" stroke="#9aa0c8"/><path d="M3 4 h6 M3 7 h4 M3 10 h4 M11 9 h7 M11 12 h7 M11 15 h7" stroke="#1a2060" stroke-width="1.3"/></svg>
<svg class="a" style="left:272px;top:68px;" width="21" height="22" viewBox="0 0 21 22"><rect x="1" y="3" width="11" height="15" fill="#ececec" stroke="#b8b8b8"/><rect x="4" y="1" width="5" height="3" fill="#bbb"/><rect x="9" y="8" width="11" height="13" fill="#f8f8f8" stroke="#b8b8b8"/><path d="M11 12 h7 M11 15 h7 M11 18 h7" stroke="#555" stroke-width="1.2"/></svg>
<svg class="a" style="left:305px;top:71px;" width="17" height="17" viewBox="0 0 17 17"><path d="M1 1 L16 16 M16 1 L1 16" stroke="#222" stroke-width="2.6"/></svg>
<svg class="a" style="left:340px;top:70px;" width="21" height="19" viewBox="0 0 21 19"><path d="M4 8 Q10 2 15 8 Q18 13 13 17" fill="none" stroke="#7a7a7a" stroke-width="2.6"/><path d="M0 3 l8 1 l-5 7 Z" fill="#7a7a7a"/></svg>
<svg class="a" style="left:363px;top:71px;" width="10" height="18" viewBox="0 0 10 18"><path d="M3 0 h4 v5 h3 l-5 5 l-5 -5 h3 Z" fill="#8a8a8a"/><rect x="0" y="12" width="10" height="2" fill="#8a8a8a"/><rect x="0" y="16" width="10" height="2" fill="#8a8a8a"/></svg>
<svg class="a" style="left:384px;top:70px;" width="21" height="19" viewBox="0 0 21 19"><path d="M16 8 Q10 2 5 8 Q2 13 7 17" fill="none" stroke="#7a7a7a" stroke-width="2.6"/><path d="M21 3 l-8 1 l5 7 Z" fill="#7a7a7a"/></svg>
<svg class="a" style="left:409px;top:71px;" width="10" height="18" viewBox="0 0 10 18"><path d="M3 0 h4 v5 h3 l-5 5 l-5 -5 h3 Z" fill="#8a8a8a"/><rect x="0" y="12" width="10" height="2" fill="#8a8a8a"/><rect x="0" y="16" width="10" height="2" fill="#8a8a8a"/></svg>
<svg class="a" style="left:436px;top:68px;" width="22" height="21" viewBox="0 0 22 21"><rect x="1" y="1" width="14" height="11" fill="#eef2ff" stroke="#6a80c0"/><path d="M3 4.5 h10 M3 7.5 h10" stroke="#2a3a90" stroke-width="1.5"/><rect x="6" y="9" width="15" height="11" fill="#cfe0f8" stroke="#6a80c0"/><path d="M10 12 v6 M13 12 h2 v6 M16 12 v6" stroke="#1a2060" stroke-width="1.5"/></svg>
<svg class="a" style="left:468px;top:68px;" width="21" height="22" viewBox="0 0 21 22"><rect x="0" y="0" width="21" height="22" fill="#3a4a5a"/><rect x="0" y="0" width="6" height="22" fill="#4ac0c8"/><path d="M9 2 h4 v8 h3 l-5 6 l-5 -6 h3 Z" fill="#fff"/></svg>
<svg class="a" style="left:500px;top:68px;" width="21" height="22" viewBox="0 0 21 22"><rect x="0" y="0" width="21" height="22" fill="#3a4a5a"/><rect x="0" y="0" width="6" height="22" fill="#4ac0c8"/><path d="M9 18 h4 v-8 h3 l-5 -6 l-5 6 h3 Z" fill="#fff"/></svg>
<svg class="a" style="left:531px;top:68px;" width="21" height="21" viewBox="0 0 21 21"><rect x="2" y="0" width="17" height="13" fill="#8a8a8a"/><rect x="5" y="2" width="11" height="8" fill="#b0b0b0"/><rect x="0" y="15" width="21" height="6" fill="#9a9a9a"/></svg>
<svg class="a" style="left:563px;top:68px;" width="22" height="22" viewBox="0 0 22 22"><rect x="1" y="1" width="13" height="13" fill="#c0c0c0" stroke="#888"/><path d="M4 4 l6 4 l-6 4 Z" fill="#fff"/><text x="9" y="21" font-size="10" font-family="Liberation Sans" font-weight="bold" fill="#555">RT</text></svg>
<svg class="a" style="left:598px;top:69px;" width="21" height="21" viewBox="0 0 21 21"><path d="M3 18 l5 -5" stroke="#8a8a8a" stroke-width="3"/><ellipse cx="11" cy="10" rx="5" ry="7" transform="rotate(45 11 10)" fill="#b4b4b4"/><path d="M13 5 l4 -4 M16 8 l4 -4" stroke="#8a8a8a" stroke-width="2.4"/></svg>
<svg class="a" style="left:729px;top:69px;" width="22" height="21" viewBox="0 0 22 21"><path d="M2 19 l5 -5" stroke="#3a50d0" stroke-width="3"/><ellipse cx="8" cy="13" rx="4" ry="6" transform="rotate(45 8 13)" fill="#3a50d0"/><ellipse cx="14" cy="7" rx="4" ry="6" transform="rotate(45 14 7)" fill="#5a70f0"/><path d="M16 4 l4 -3" stroke="#3a50d0" stroke-width="2.4"/></svg>
<svg class="a" style="left:988px;top:68px;" width="21" height="22" viewBox="0 0 21 22"><path d="M7 1 v6 M2 13 v-5 h10 v5 M7 8 v5" stroke="#4ab0b8" stroke-width="2.4" fill="none"/><rect x="5" y="0" width="4" height="5" fill="#4ab0b8"/><rect x="0" y="12" width="4" height="8" fill="#4ab0b8"/><rect x="5" y="12" width="4" height="8" fill="#4ab0b8"/><text x="10" y="20" font-size="14" font-weight="bold" font-family="Liberation Sans" fill="#1a2060">?</text></svg>
<svg class="a" style="left:1020px;top:68px;" width="21" height="22" viewBox="0 0 21 22"><rect x="0" y="1" width="20" height="20" fill="#9a9a9a"/><rect x="0" y="1" width="7" height="20" fill="#bdbdbd"/><path d="M10 10 l8 5 l-8 5 Z" fill="#e0e0e0"/></svg>
<svg class="a" style="left:1051px;top:68px;" width="21" height="22" viewBox="0 0 21 22"><rect x="0" y="1" width="20" height="20" fill="#3a4a5a"/><rect x="0" y="1" width="7" height="20" fill="#4ac0c8"/><rect x="12" y="13" width="7" height="7" fill="#e02020"/></svg>
<svg class="a" style="left:1087px;top:69px;" width="20" height="20" viewBox="0 0 20 20"><path d="M2 2 l15 15 M17 2 l-15 15" stroke="#1a2a90" stroke-width="2.6"/><path d="M14 1 h5 v4" stroke="#aab" stroke-width="1" fill="none"/><path d="M1 19 h6" stroke="#aab" stroke-width="1"/></svg>
<svg class="a" style="left:1123px;top:68px;" width="21" height="21" viewBox="0 0 21 21"><rect x="1" y="1" width="19" height="19" fill="#f8f8ff" stroke="#b8c0e0"/><path d="M1 10.5 h19" stroke="#6070b0" stroke-width="1.6"/></svg>
<svg class="a" style="left:1155px;top:68px;" width="21" height="21" viewBox="0 0 21 21"><rect x="1" y="1" width="19" height="19" fill="#f8f8ff" stroke="#b8c0e0"/><path d="M10.5 1 v19" stroke="#6070b0" stroke-width="1.6"/></svg>
<svg class="a" style="left:1360px;top:69px;" width="23" height="23" viewBox="0 0 23 23"><rect x="1" y="0" width="12" height="15" fill="#f4f4f8" stroke="#b8bcd0"/><path d="M3 3 h8 M3 6 h8 M3 9 h8" stroke="#9aa0c0"/><rect x="8" y="10" width="6" height="12" rx="1" fill="#3a3a70"/><rect x="16" y="10" width="6" height="12" rx="1" fill="#3a3a70"/><rect x="12" y="13" width="6" height="3" fill="#3a3a70"/></svg>
<svg class="a" style="left:1405px;top:68px;" width="34" height="21" viewBox="0 0 34 21"><rect x="1" y="3" width="32" height="17" rx="8.5" fill="#f2f2f2" stroke="#3a3a3a" stroke-width="1.8"/><rect x="5" y="6" width="24" height="11" rx="5.5" fill="#0e1a2a"/><circle cx="12" cy="11" r="1.8" fill="#50e0d0"/><circle cx="22" cy="11" r="1.8" fill="#50e0d0"/><path d="M15 14 q2 1.2 4 0" stroke="#50e0d0" stroke-width="1.2" fill="none"/><rect x="14" y="0" width="6" height="3" rx="1" fill="#3a3a3a"/></svg>
<svg class="a" style="left:351px;top:106px;" width="16" height="14" viewBox="0 0 16 14"><rect x="0.75" y="0.75" width="14.5" height="12.5" fill="none" stroke="#f8f8f8" stroke-width="1.5"/><path d="M5 1 v12 M9 1 v12 M12 1 v12" stroke="#f8f8f8" stroke-width="1"/></svg>
<svg class="a" style="left:380px;top:105px;" width="9" height="15" viewBox="0 0 9 15"><path d="M9 0 v15 l-9 -7.5 Z" fill="#f8f8f8"/></svg>
<svg class="a" style="left:1866px;top:105px;" width="15" height="15" viewBox="0 0 15 15"><rect x="5" y="1" width="9" height="9" fill="none" stroke="#fff" stroke-width="2"/><rect x="0" y="5" width="10" height="10" fill="#fff"/></svg>
<svg class="a" style="left:1889px;top:105px;" width="15" height="15" viewBox="0 0 15 15"><rect x="0.75" y="0.75" width="13.5" height="13.5" fill="none" stroke="#f8f8f8" stroke-width="1.5"/><path d="M3 1 v13 M6 1 v13" stroke="#f8f8f8" stroke-width="1"/></svg>
<svg class="a" style="left:1914px;top:105px;" width="6" height="15" viewBox="0 0 6 15"><path d="M0 0 v15 l8 -7.5 Z" fill="#f8f8f8"/></svg>
<svg class="a" style="left:0px;top:176px;" width="14" height="20" viewBox="0 0 14 20"><g fill="#9a9a9a"><rect x="0" y="8" width="12" height="3"/><rect x="0" y="13" width="12" height="3"/><rect x="0" y="18" width="8" height="2"/></g><g stroke="#aaa" stroke-width="1.2"><path d="M7 1 v7 M3.5 4.5 h7 M5 2 l4 5 M9 2 l-4 5"/></g></svg>
<div class="a" style="left:328px;top:170px;width:1px;height:28px;background:repeating-linear-gradient(#9c9c9c 0 1px,transparent 1px 3px);"></div>
<div class="a" style="left:331px;top:168px;width:27px;height:29px;background:#fafbff;border:1px solid #8a94b8;border-radius:2px"></div>
<svg class="a" style="left:335px;top:172px;" width="19" height="19" viewBox="0 0 19 19"><rect x="0.5" y="0.5" width="18" height="18" fill="#f4f6ff" stroke="#a8acd0"/><rect x="0.5" y="0.5" width="18" height="3" fill="#d0d8f0"/><g fill="#555"><rect x="3" y="6" width="3" height="2"/><rect x="8" y="6" width="3" height="2"/><rect x="13" y="6" width="3" height="2"/><rect x="3" y="10" width="3" height="2"/><rect x="8" y="10" width="3" height="2"/><rect x="13" y="10" width="3" height="2"/></g><rect x="1" y="15" width="17" height="2" fill="#9aa0d0"/></svg>
<svg class="a" style="left:366px;top:172px;" width="22" height="20" viewBox="0 0 22 20"><rect x="0" y="3" width="16" height="3" fill="#2a3a60"/><rect x="0" y="6" width="16" height="13" fill="#f4f4f4" stroke="#bbb" stroke-width=".5"/><g fill="#553"><rect x="2" y="9" width="3" height="2"/><rect x="7" y="9" width="3" height="2"/><rect x="12" y="9" width="3" height="2"/><rect x="2" y="13" width="3" height="2"/><rect x="7" y="13" width="3" height="2"/><rect x="12" y="13" width="3" height="2"/></g><rect x="0" y="17" width="16" height="2" fill="#2a3a60"/><path d="M8 2 q6 -2 9 4" fill="none" stroke="#2a9a3a" stroke-width="2.6"/><path d="M13 6 h8 l-4 5 Z" fill="#2a9a3a"/></svg>
<svg class="a" style="left:411px;top:173px;" width="20" height="19" viewBox="0 0 20 19"><path d="M1.2 10 v8.5 M1.2 14.2 h2 M7.5 10 L2.5 14.2 L7.5 18.5 M9 10 L14 14.2 L9 18.5 M15.3 10 v8.5 M15.3 14.2 h-2" stroke="#2a3fb8" stroke-width="2.3" fill="none"/><g stroke="#3a6a10" stroke-width="1.5"><path d="M13 0 v10 M8 5 h10 M9.5 1.5 l7 7 M16.5 1.5 l-7 7"/></g><circle cx="13" cy="5" r="2.8" fill="#e0f070"/></svg>
<svg class="a" style="left:443px;top:173px;" width="20" height="19" viewBox="0 0 20 19"><path d="M1.2 10 v8.5 M1.2 14.2 h2 M7.5 10 L2.5 14.2 L7.5 18.5 M9 10 L14 14.2 L9 18.5 M15.3 10 v8.5 M15.3 14.2 h-2" stroke="#2a3fb8" stroke-width="2.3" fill="none"/><path d="M9 1 l8 8 M17 1 l-8 8" stroke="#111" stroke-width="2.2"/></svg>
<svg class="a" style="left:475px;top:172px;" width="20" height="20" viewBox="0 0 20 20"><g stroke="#9a9a9a" stroke-width="2"><path d="M1 8 h11 M1 11.5 h11 M1 15 h11 M4 18 h8"/></g><g stroke="#b0b0b0" stroke-width="1.2"><path d="M14 1 v9 M9.5 5.5 h9 M11 2.5 l6 6 M17 2.5 l-6 6"/></g></svg>
<svg class="a" style="left:506px;top:172px;" width="20" height="20" viewBox="0 0 20 20"><g stroke="#9a9a9a" stroke-width="2"><path d="M1 8 h11 M1 11.5 h11 M1 15 h11 M4 18 h8"/></g><g stroke="#b0b0b0" stroke-width="1.2"><path d="M14 1 v9 M9.5 5.5 h9 M11 2.5 l6 6 M17 2.5 l-6 6"/></g></svg>
<div class="a" style="left:532px;top:169px;width:1px;height:30px;background:repeating-linear-gradient(#9c9c9c 0 1px,transparent 1px 3px);"></div>
<svg class="a" style="left:543px;top:173px;" width="18" height="18" viewBox="0 0 18 18"><ellipse cx="6" cy="3" rx="5" ry="2.5" fill="#c0c0c0"/><rect x="1" y="3" width="10" height="11" fill="#8c8c8c"/><ellipse cx="6" cy="14" rx="5" ry="2.5" fill="#8c8c8c"/><circle cx="13" cy="13" r="4.5" fill="#bbb"/><path d="M9 13 h8 M13 9 v8" stroke="#fff" stroke-width="1.4"/></svg>
<div class="a" style="left:569px;top:169px;width:1px;height:30px;background:repeating-linear-gradient(#9c9c9c 0 1px,transparent 1px 3px);"></div>
<svg class="a" style="left:578px;top:173px;" width="22" height="20" viewBox="0 0 22 20"><g fill="#7a7a7a"><rect x="0" y="1" width="22" height="4"/><rect x="0" y="8" width="22" height="4"/><rect x="0" y="15" width="22" height="4"/></g><g fill="#aaa"><rect x="0" y="0" width="6" height="2"/><rect x="0" y="7" width="6" height="2"/><rect x="0" y="14" width="6" height="2"/></g></svg>
<svg class="a" style="left:611px;top:174px;" width="18" height="17" viewBox="0 0 18 17"><rect x="1" y="1" width="16" height="15" fill="#e8ecff" stroke="#2a3fb8" stroke-width="2"/><rect x="1" y="1" width="16" height="5" fill="#2a3fb8"/><path d="M3 11 h13" stroke="#111" stroke-width="1.5"/></svg>
<svg class="a" style="left:642px;top:174px;" width="18" height="17" viewBox="0 0 18 17"><rect x="0" y="2" width="18" height="6" fill="#3348d8"/><rect x="0" y="9" width="18" height="6" fill="#2a3fb8"/><path d="M0 2 l4 3 l-4 3 Z M0 9 l4 3 l-4 3 Z" fill="#d8e0ff"/></svg>
<div class="a" style="left:668px;top:169px;width:29px;height:29px;background:#fafbff;border:1px solid #8a94b8;border-radius:2px"></div>
<svg class="a" style="left:673px;top:174px;" width="20" height="18" viewBox="0 0 20 18"><path d="M2 3 Q2 1 4 1 H16 Q18 1 18 3 V10 Q18 12 16 12 H8 L4 16 L5 12 H4 Q2 12 2 10 Z" fill="#f4f6ff" stroke="#2a3fb8" stroke-width="1.4"/><g fill="#111"><circle cx="6.5" cy="6.5" r="1.2"/><circle cx="10" cy="6.5" r="1.2"/><circle cx="13.5" cy="6.5" r="1.2"/></g></svg>
<svg class="a" style="left:703px;top:173px;" width="21" height="19" viewBox="0 0 21 19"><path d="M5 1 H20 V9 H5 L1 5 Z" fill="#8a3cc8"/><path d="M5 10 H20 V18 H5 L1 14 Z" fill="#8a3cc8"/><rect x="10" y="3" width="7" height="3" fill="#e8d8ff"/><rect x="10" y="12" width="7" height="3" fill="#e8d8ff"/></svg>
<svg class="a" style="left:729px;top:177px;" width="10" height="14" viewBox="0 0 10 14"><path d="M3 0 h4 v5 h3 l-5 5 l-5 -5 h3 Z" fill="#111"/><rect x="0" y="11" width="10" height="3" fill="#111"/></svg>
<svg class="a" style="left:748px;top:173px;" width="21" height="19" viewBox="0 0 21 19"><path d="M3 2 Q3 0 5 0 H17 Q19 0 19 2 V9 Q19 11 17 11 H10 L5 15 L6 11 H5 Q3 11 3 9 Z" fill="#6a6a6a"/><rect x="8" y="9" width="12" height="9" fill="#333"/><g fill="#fff"><circle cx="7" cy="5" r="1.2"/><circle cx="11" cy="5" r="1.2"/><circle cx="15" cy="5" r="1.2"/></g></svg>
<svg class="a" style="left:774px;top:177px;" width="10" height="14" viewBox="0 0 10 14"><path d="M3 0 h4 v5 h3 l-5 5 l-5 -5 h3 Z" fill="#111"/><rect x="0" y="11" width="10" height="3" fill="#111"/></svg>
<svg class="a" style="left:793px;top:173px;" width="21" height="19" viewBox="0 0 21 19"><path d="M1.2 1 v8 M1.2 5 h2 M7.5 1 L2.5 5 L7.5 9 M10 1 L15 5 L10 9 M16.3 1 v8 M16.3 5 h-2" stroke="#3a52e0" stroke-width="2.2" fill="none"/><path d="M5 10 H20 V18 H5 L1 14 Z" fill="#8a3cc8"/><rect x="10" y="12" width="7" height="3" fill="#e8d8ff"/></svg>
<svg class="a" style="left:819px;top:177px;" width="10" height="14" viewBox="0 0 10 14"><path d="M3 0 h4 v5 h3 l-5 5 l-5 -5 h3 Z" fill="#111"/><rect x="0" y="11" width="10" height="3" fill="#111"/></svg>
<div class="a" style="left:835px;top:169px;width:29px;height:29px;background:#fafbff;border:1px solid #8a94b8;border-radius:2px"></div>
<svg class="a" style="left:840px;top:174px;" width="19" height="17" viewBox="0 0 19 17"><rect x="1" y="1" width="17" height="15" fill="#fff" stroke="#9aa0c0"/><path d="M4 6 h12 M4 11 h12" stroke="#111" stroke-width="1.6"/><circle cx="4" cy="6" r="1" fill="#111"/></svg>
<div class="a" style="left:867px;top:169px;width:28px;height:29px;background:#fafbff;border:1px solid #8a94b8;border-radius:2px"></div>
<svg class="a" style="left:871px;top:173px;" width="21" height="19" viewBox="0 0 21 19"><g fill="none" stroke="#6a7090" stroke-width="1"><rect x="1" y="2" width="3.5" height="3.5"/><rect x="1" y="8" width="3.5" height="3.5"/><rect x="1" y="14" width="3.5" height="3.5"/></g><path d="M13 1 l2.2 4.5 l5 .6 l-3.7 3.4 l1 5 l-4.5 -2.5 l-4.5 2.5 l1 -5 l-3.7 -3.4 l5 -.6 Z" fill="#f0d030" stroke="#c8a010" stroke-width=".6"/><path d="M8 17 h6 l-2 -2" stroke="#222" fill="none" stroke-width="1.3"/></svg>
<div class="a" style="left:898px;top:169px;width:1px;height:30px;background:repeating-linear-gradient(#9c9c9c 0 1px,transparent 1px 3px);"></div>
<svg class="a" style="left:909px;top:173px;" width="19" height="19" viewBox="0 0 19 19"><path d="M4 17 Q1 9 8 6" fill="none" stroke="#1a2060" stroke-width="2.6"/><path d="M6 2 l6 4 l-6 4 Z" fill="#1a2060"/><circle cx="15" cy="5" r="4.2" fill="#d03040"/><path d="M13 3 l4 4 M17 3 l-4 4" stroke="#fff" stroke-width="1.3"/></svg>
<svg class="a" style="left:940px;top:174px;" width="19" height="19" viewBox="0 0 19 19"><path d="M8 1 Q1 5 4 12" fill="none" stroke="#1a2060" stroke-width="2.6"/><path d="M1 11 l5 6 l3 -6 Z" fill="#1a2060"/><circle cx="14" cy="13" r="4.2" fill="#d03040"/><path d="M12 11 l4 4 M16 11 l-4 4" stroke="#fff" stroke-width="1.3"/></svg>
<svg class="a" style="left:972px;top:173px;" width="19" height="18" viewBox="0 0 19 18"><path d="M5 17 Q1 10 8 6" fill="none" stroke="#6a6a6a" stroke-width="2.4"/><path d="M6 2 l6 4 l-6 4 Z" fill="#6a6a6a"/><rect x="9" y="1" width="9" height="10" fill="#8a8a8a"/><rect x="8" y="10" width="11" height="7" fill="#fff" stroke="#777"/><path d="M10 13.5 h7" stroke="#333" stroke-width="1.4"/></svg>
<svg class="a" style="left:1003px;top:173px;" width="19" height="18" viewBox="0 0 19 18"><path d="M5 17 Q1 10 8 6" fill="none" stroke="#6a6a6a" stroke-width="2.4"/><path d="M6 2 l6 4 l-6 4 Z" fill="#6a6a6a"/><rect x="9" y="1" width="9" height="10" fill="#8a8a8a"/><rect x="8" y="10" width="11" height="7" fill="#fff" stroke="#777"/><path d="M10 13.5 h7" stroke="#333" stroke-width="1.4"/></svg>
<svg class="a" style="left:1035px;top:173px;" width="18" height="19" viewBox="0 0 18 19"><path d="M1 4 h4 v-3 h6 l5 6 l-5 6 h-6 v-3 h-4 Z" fill="#777"/><path d="M8 4 l4 3 l-4 3 Z" fill="#ddd"/><path d="M4 13 l5 5 l9 -8" fill="none" stroke="#777" stroke-width="2.4"/></svg>
<div class="a" style="left:1061px;top:169px;width:1px;height:30px;background:repeating-linear-gradient(#9c9c9c 0 1px,transparent 1px 3px);"></div>
<svg class="a" style="left:1072px;top:173px;" width="18" height="18" viewBox="0 0 18 18"><path d="M6 17 Q1 10 7 5" fill="none" stroke="#1a2060" stroke-width="2.6"/><path d="M5 1 l6 4 l-6 4 Z" fill="#1a2060"/><path d="M9 8 h9 M9 11.5 h9 M9 15 h9" stroke="#4a60c0" stroke-width="2"/></svg>
<svg class="a" style="left:1105px;top:173px;" width="17" height="19" viewBox="0 0 17 19"><path d="M3 1 v9" stroke="#555" stroke-width="2.4"/><path d="M7 10 h9 M7 13.5 h9 M7 17 h9" stroke="#888" stroke-width="2.2"/></svg>
<svg class="a" style="left:1135px;top:173px;" width="17" height="19" viewBox="0 0 17 19"><path d="M1 1 l5 7" stroke="#555" stroke-width="2"/><path d="M1 5 l4 -3" stroke="#555" stroke-width="1.2"/><path d="M7 10 h9 M7 13.5 h9 M7 17 h9" stroke="#888" stroke-width="2.2"/></svg>
<div class="a" style="left:1161px;top:169px;width:1px;height:30px;background:repeating-linear-gradient(#9c9c9c 0 1px,transparent 1px 3px);"></div>
<svg class="a" style="left:1172px;top:173px;" width="16" height="19" viewBox="0 0 16 19"><path d="M5 17 Q0 9 6 5" fill="none" stroke="#1a2060" stroke-width="2.6"/><path d="M4 1 l6 4 l-6 4 Z" fill="#1a2060"/><path d="M9 3 h6 v15 l-3 -3 l-3 3 Z" fill="#3040b0"/></svg>
<svg class="a" style="left:1204px;top:173px;" width="16" height="19" viewBox="0 0 16 19"><path d="M10 5 Q2 7 5 16" fill="none" stroke="#1a2060" stroke-width="2.6"/><path d="M1 13 l5 5 l3 -6 Z" fill="#1a2060"/><path d="M9 1 h6 v15 l-3 -3 l-3 3 Z" fill="#3040b0"/></svg>
<div class="a" style="left:1229px;top:169px;width:1px;height:30px;background:repeating-linear-gradient(#9c9c9c 0 1px,transparent 1px 3px);"></div>
<svg class="a" style="left:1240px;top:173px;" width="18" height="19" viewBox="0 0 18 19"><circle cx="6" cy="12" r="5.5" fill="#e86a20"/><path d="M6 6.5 A5.5 5.5 0 0 0 6 17.5 Z" fill="#3050c0"/><circle cx="11" cy="5" r="3.6" fill="none" stroke="#333" stroke-width="1.8"/><path d="M13.5 7.5 l4 4" stroke="#333" stroke-width="2.4"/></svg>
<div class="a" style="left:1266px;top:169px;width:28px;height:29px;background:#fafbff;border:1px solid #8a94b8;border-radius:2px"></div>
<svg class="a" style="left:1270px;top:174px;" width="20" height="19" viewBox="0 0 20 19"><path d="M3 4 h6 v3 q0 2 -3 2 q-3 0 -3 -2 Z M11 4 h6 v3 q0 2 -3 2 q-3 0 -3 -2 Z" fill="none" stroke="#1a2060" stroke-width="1.6"/><path d="M9 5 h2" stroke="#1a2060" stroke-width="1.4"/><path d="M9 11 l7 3 l-7 3 Z" fill="#3cc070"/></svg>
<div class="a" style="left:1297px;top:169px;width:1px;height:30px;background:repeating-linear-gradient(#9c9c9c 0 1px,transparent 1px 3px);"></div>
<svg class="a" style="left:1308px;top:173px;" width="18" height="19" viewBox="0 0 18 19"><ellipse cx="6" cy="3" rx="5" ry="2.5" fill="#c8c8c8"/><rect x="1" y="3" width="10" height="12" fill="#a8a8a8"/><ellipse cx="6" cy="15" rx="5" ry="2.5" fill="#a8a8a8"/><rect x="10" y="10" width="7" height="7" rx="1" fill="#8a8a8a"/><path d="M11.5 10 v-2 q2 -2.5 4 0 v2" fill="none" stroke="#8a8a8a" stroke-width="1.3"/></svg>
<svg class="a" style="left:1559px;top:172px;" width="23" height="23" viewBox="0 0 23 23"><rect x="1" y="1" width="20" height="16" fill="#f4f6ff" stroke="#9aa0c8"/><rect x="1" y="1" width="20" height="4" fill="#c0c8e8"/><path d="M3 10 h10" stroke="#9aa0c8"/><circle cx="17" cy="13" r="3" fill="#2a3a50"/><rect x="13" y="16" width="8" height="6" rx="2" fill="#2a5a9a"/></svg>
<svg class="a" style="left:0;top:0" width="1920" height="1080"><path d="M410 320.3 h11 M421 315 v11 M429 315 v11 M429 320.3 h10" stroke="#161630" stroke-width="2.8" fill="none"/><path d="M454 320.3 h11 M465 315 v11 M476 315 v11 M476 320.3 h10" stroke="#161630" stroke-width="2.8" fill="none"/><path d="M471.5 316 l-2 9" stroke="#666" stroke-width="1.3"/><path d="M496.5 320.3 h13 M520 320.3 h13" stroke="#161630" stroke-width="2.8"/><path d="M512.5 315.5 q-3 5 0 10 M516.5 315.5 q3 5 0 10" stroke="#161630" stroke-width="2.4" fill="none"/><rect x="550.5" y="311.5" width="17" height="17.5" fill="#fff" stroke="#222" stroke-width="1.4"/><path d="M547 316.3 h3.5 M567.5 316.3 h3.5" stroke="#222" stroke-width="2"/><text x="553" y="324.5" font-size="10.5" font-family="Liberation Sans" fill="#444">??</text><path d="M592.5 315 v5.3 h13" stroke="#161630" stroke-width="2.8" fill="none"/><path d="M604 315 l8 5.3 l-8 5.3 Z" fill="#161630"/><path d="M636.5 320.7 h15 v-6" stroke="#161630" stroke-width="2.8" fill="none"/><path d="M645.5 316.5 l6 -6.5 l6 6.5 Z" fill="#161630"/></svg>
<svg class="a" style="left:1510px;top:273px;" width="44" height="16" viewBox="0 0 44 16"><rect x="0.0" y="0" width="3.4" height="16" fill="#20a8a0"/><rect x="5.4" y="0" width="3.4" height="16" fill="#20a8a0"/><rect x="10.8" y="0" width="3.4" height="16" fill="#20a8a0"/><rect x="16.200000000000003" y="0" width="3.4" height="16" fill="#c8d4e0"/><rect x="21.6" y="0" width="3.4" height="16" fill="#20a8a0"/><rect x="27.0" y="0" width="3.4" height="16" fill="#20a8a0"/><rect x="32.400000000000006" y="0" width="3.4" height="16" fill="#20a8a0"/><rect x="37.800000000000004" y="0" width="3.4" height="16" fill="#20a8a0"/></svg>
<svg class="a" style="left:1575px;top:270px;" width="23" height="22" viewBox="0 0 23 22"><rect x="0.5" y="0.5" width="21" height="21" fill="#ececec" stroke="#888"/><path d="M6 4 v10 h6" fill="none" stroke="#222" stroke-width="1.6"/><circle cx="15" cy="15" r="4" fill="#c00000"/></svg>
<svg class="a" style="left:11px;top:231px;" width="15" height="20" viewBox="0 0 15 20"><defs><linearGradient id="pg" x1="0" y1="0" x2="1" y2="1"><stop offset="0" stop-color="#e8e8ff"/><stop offset="1" stop-color="#ffffff"/></linearGradient></defs><path d="M1 1 h9 l4 4 v14 h-13 Z" fill="url(#pg)" stroke="#b8bce0" stroke-width="1"/><rect x="1" y="17" width="13" height="2" fill="#a8acd0"/></svg>
<svg class="a" style="left:31px;top:255px;" width="21" height="21" viewBox="0 0 21 21"><path d="M0 6 h12 l3 3 v11 h-15 Z" fill="#3a4ae0"/><rect x="0" y="18" width="15" height="2" fill="#1a2a90"/><g stroke="#c8e020" stroke-width="1.6"><path d="M15 0 v11 M9.5 5.5 h11 M11 1.5 l8 8 M19 1.5 l-8 8"/></g><circle cx="15" cy="5.5" r="2.5" fill="#f0f870"/></svg>
<svg class="a" style="left:31px;top:281px;" width="20" height="20" viewBox="0 0 20 20"><rect x="8" y="0" width="4" height="7" fill="#4aa8b0"/><path d="M10 7 v4 M3 14 v-3 h14 v3 M10 11 v3" stroke="#2a3a50" stroke-width="1.8" fill="none"/><rect x="1" y="13" width="4" height="7" fill="#4aa8b0"/><rect x="8" y="13" width="4" height="7" fill="#4aa8b0"/><rect x="15" y="13" width="4" height="7" fill="#4aa8b0"/></svg>
<svg class="a" style="left:12px;top:312px;" width="11" height="6" viewBox="0 0 11 6"><path d="M0 0 h11 l-5.5 6 Z" fill="#111"/></svg>
<svg class="a" style="left:31px;top:306px;" width="20" height="20" viewBox="0 0 20 20"><path d="M0 2 h6 l2 2 h4 v16 h-12 Z" fill="#f4d480" stroke="#c8a850" stroke-width=".6"/><rect x="7" y="7" width="13" height="13" fill="#2a3a4a"/><rect x="8" y="9" width="3" height="10" fill="#40b8c0"/><rect x="13" y="0" width="7" height="7" fill="#18c030"/></svg>
<svg class="a" style="left:55px;top:332px;" width="19" height="19" viewBox="0 0 19 19"><rect x="0" y="0" width="7" height="19" fill="#2a3a4a"/><rect x="1" y="1" width="5" height="17" fill="#40d0d8"/><path d="M13 9 v10" stroke="#1a3a70" stroke-width="3"/><path d="M9 1 q0 7 4 8 q4 -1 4 -8" fill="none" stroke="#1a5aa0" stroke-width="2.6"/></svg>
<svg class="a" style="left:56px;top:356px;" width="16" height="20" viewBox="0 0 16 20"><rect x="0.5" y="0.5" width="15" height="19" fill="#f0f2ff" stroke="#a8acd0"/><path d="M4 3 v6 q0 4 4 4 q4 0 4 -4 v-6" fill="none" stroke="#1a2060" stroke-width="1.6"/><path d="M8 13 v3" stroke="#1a2060" stroke-width="1.6"/><circle cx="11" cy="15" r="2" fill="#1a2060"/></svg>
<svg class="a" style="left:36px;top:388px;" width="11" height="6" viewBox="0 0 11 6"><path d="M0 0 h11 l-5.5 6 Z" fill="#111"/></svg>
<svg class="a" style="left:54px;top:382px;" width="20" height="20" viewBox="0 0 20 20"><path d="M0 1 h7 l2 2 h10 v15 h-19 Z" fill="#f4d890" stroke="#c8a858" stroke-width=".8"/><rect x="0" y="5" width="19" height="13" fill="#f8e6a8"/><rect x="5" y="10" width="10" height="7" fill="#555"/><rect x="1" y="12" width="4" height="2" fill="#555"/><rect x="15" y="13" width="4" height="2" fill="#555"/><circle cx="10" cy="13.5" r="2" fill="#ddd"/></svg>
<svg class="a" style="left:77px;top:406px;" width="21" height="21" viewBox="0 0 21 21"><path d="M0 6 h12 l3 3 v11 h-15 Z" fill="#3a4ae0"/><rect x="0" y="18" width="15" height="2" fill="#1a2a90"/><g stroke="#c8e020" stroke-width="1.6"><path d="M15 0 v11 M9.5 5.5 h11 M11 1.5 l8 8 M19 1.5 l-8 8"/></g><circle cx="15" cy="5.5" r="2.5" fill="#f0f870"/></svg>
<svg class="a" style="left:77px;top:435px;" width="20" height="15" viewBox="0 0 20 15"><rect x="4" y="1" width="13" height="13" rx="1.5" fill="#8a2ad0"/><rect x="0" y="3.5" width="5" height="2.5" fill="#8a2ad0"/><rect x="0" y="8.5" width="5" height="2.5" fill="#8a2ad0"/><rect x="16" y="6" width="4" height="2.5" fill="#8a2ad0"/><circle cx="10.5" cy="7.5" r="2.5" fill="#b060f0"/></svg>
<svg class="a" style="left:77px;top:460px;" width="20" height="15" viewBox="0 0 20 15"><rect x="4" y="1" width="13" height="13" rx="1.5" fill="#1a9a30"/><rect x="0" y="3.5" width="5" height="2.5" fill="#1a9a30"/><rect x="0" y="8.5" width="5" height="2.5" fill="#1a9a30"/><rect x="16" y="6" width="4" height="2.5" fill="#1a9a30"/><circle cx="10.5" cy="7.5" r="2.5" fill="#40d050"/></svg>
<svg class="a" style="left:60px;top:487px;" width="7" height="11" viewBox="0 0 7 11"><path d="M0 0 v11 l7 -5.5 Z" fill="#111"/></svg>
<svg class="a" style="left:77px;top:482px;" width="20" height="20" viewBox="0 0 20 20"><path d="M0 1 h7 l2 2 h10 v15 h-19 Z" fill="#f4d890" stroke="#c8a858" stroke-width=".8"/><rect x="0" y="5" width="19" height="13" fill="#f8e6a8"/><rect x="5" y="7" width="4" height="3" fill="#3a3ac0"/><rect x="10" y="11" width="6" height="3" fill="#3a3ac0"/></svg>
<svg class="a" style="left:60px;top:512px;" width="7" height="11" viewBox="0 0 7 11"><path d="M0 0 v11 l7 -5.5 Z" fill="#111"/></svg>
<svg class="a" style="left:77px;top:507px;" width="20" height="20" viewBox="0 0 20 20"><path d="M0 1 h7 l2 2 h10 v15 h-19 Z" fill="#d4d4d4" stroke="#aaa" stroke-width=".8"/><rect x="5" y="10" width="10" height="7" fill="#9a9a9a"/><circle cx="10" cy="13.5" r="2" fill="#eee"/></svg>
<svg class="a" style="left:37px;top:538px;" width="7" height="11" viewBox="0 0 7 11"><path d="M0 0 v11 l7 -5.5 Z" fill="#111"/></svg>
<svg class="a" style="left:54px;top:533px;" width="20" height="20" viewBox="0 0 20 20"><path d="M0 1 h7 l2 2 h10 v15 h-19 Z" fill="#f4d890" stroke="#c8a858" stroke-width=".8"/><rect x="0" y="5" width="19" height="13" fill="#f8e6a8"/><circle cx="13" cy="13" r="5" fill="#2a60e0"/></svg>
<svg class="a" style="left:37px;top:563px;" width="7" height="11" viewBox="0 0 7 11"><path d="M0 0 v11 l7 -5.5 Z" fill="#111"/></svg>
<svg class="a" style="left:54px;top:558px;" width="20" height="20" viewBox="0 0 20 20"><path d="M0 1 h7 l2 2 h10 v15 h-19 Z" fill="#f4d890" stroke="#c8a858" stroke-width=".8"/><rect x="0" y="5" width="19" height="13" fill="#f8e6a8"/><rect x="8" y="9" width="11" height="10" fill="#c8d0e8" stroke="#666"/><path d="M10 15 h7" stroke="#1a2060" stroke-width="2"/></svg>
<svg class="a" style="left:37px;top:588px;" width="7" height="11" viewBox="0 0 7 11"><path d="M0 0 v11 l7 -5.5 Z" fill="#111"/></svg>
<svg class="a" style="left:54px;top:583px;" width="20" height="20" viewBox="0 0 20 20"><path d="M0 1 h7 l2 2 h10 v15 h-19 Z" fill="#f4d890" stroke="#c8a858" stroke-width=".8"/><rect x="0" y="5" width="19" height="13" fill="#f8e6a8"/><path d="M8 12 h10 v6 h-10 l-3 -3 Z" fill="#8a3cc8"/></svg>
<svg class="a" style="left:37px;top:613px;" width="7" height="11" viewBox="0 0 7 11"><path d="M0 0 v11 l7 -5.5 Z" fill="#111"/></svg>
<svg class="a" style="left:54px;top:608px;" width="20" height="20" viewBox="0 0 20 20"><path d="M0 1 h7 l2 2 h10 v15 h-19 Z" fill="#f4d890" stroke="#c8a858" stroke-width=".8"/><rect x="0" y="5" width="19" height="13" fill="#f8e6a8"/><rect x="8" y="8" width="10" height="11" fill="#d8dcf0" stroke="#8a8cb0"/><path d="M10 11 h6 M10 14 h6" stroke="#3a3a90"/></svg>
<svg class="a" style="left:37px;top:639px;" width="7" height="11" viewBox="0 0 7 11"><path d="M0 0 v11 l7 -5.5 Z" fill="#111"/></svg>
<svg class="a" style="left:54px;top:634px;" width="20" height="20" viewBox="0 0 20 20"><path d="M0 1 h7 l2 2 h10 v15 h-19 Z" fill="#f4d890" stroke="#c8a858" stroke-width=".8"/><rect x="0" y="5" width="19" height="13" fill="#f8e6a8"/><rect x="2" y="8" width="16" height="8" fill="#e0e4f4"/><circle cx="5" cy="17" r="2.5" fill="none" stroke="#1a2060" stroke-width="1.4"/><circle cx="12" cy="17" r="2.5" fill="none" stroke="#1a2060" stroke-width="1.4"/></svg>
<svg class="a" style="left:37px;top:664px;" width="7" height="11" viewBox="0 0 7 11"><path d="M0 0 v11 l7 -5.5 Z" fill="#111"/></svg>
<svg class="a" style="left:54px;top:659px;" width="20" height="20" viewBox="0 0 20 20"><path d="M0 1 h7 l2 2 h10 v15 h-19 Z" fill="#f4d890" stroke="#c8a858" stroke-width=".8"/><rect x="0" y="5" width="19" height="13" fill="#f8e6a8"/><circle cx="9" cy="12" r="4.5" fill="#4a6ad0"/><circle cx="14" cy="15" r="4.5" fill="#f06020"/></svg>
<svg class="a" style="left:37px;top:689px;" width="7" height="11" viewBox="0 0 7 11"><path d="M0 0 v11 l7 -5.5 Z" fill="#111"/></svg>
<svg class="a" style="left:54px;top:684px;" width="20" height="20" viewBox="0 0 20 20"><path d="M0 1 h7 l2 2 h10 v15 h-19 Z" fill="#f4d890" stroke="#c8a858" stroke-width=".8"/><rect x="0" y="5" width="19" height="13" fill="#f8e6a8"/><rect x="3" y="9" width="16" height="10" fill="#4a90d0"/><path d="M3 15 q4 -5 8 0 q4 4 8 -2" stroke="#e0f0ff" stroke-width="1.5" fill="none"/></svg>
<div class="a" style="left:54px;top:707px;width:330px;height:6px;overflow:hidden"><svg width="20" height="20" style="position:absolute;left:0;top:2px"><path d="M0 1 h7 l2 2 h10 v15 h-19 Z" fill="#f4d890" stroke="#c8a858" stroke-width=".8"/></svg><div class="t" style="left:26px;top:4px;font-size:13.5px;color:#1e1e1e">Connessioni OPC UA</div></div>
<svg class="a" style="left:327px;top:231px;" width="19" height="19" viewBox="0 0 19 19"><rect x="0" y="0" width="19" height="19" fill="#1ea020"/><rect x="0" y="0" width="19" height="19" fill="none" stroke="#158015"/><path d="M3.5 9.5 l4 4 l8 -9" fill="none" stroke="#e8ffe8" stroke-width="2.6"/></svg>
<svg class="a" style="left:327px;top:306px;" width="19" height="19" viewBox="0 0 19 19"><rect x="0" y="0" width="19" height="19" fill="#1ea020"/><rect x="0" y="0" width="19" height="19" fill="none" stroke="#158015"/><path d="M3.5 9.5 l4 4 l8 -9" fill="none" stroke="#e8ffe8" stroke-width="2.6"/></svg>
<svg class="a" style="left:353px;top:232px;" width="17" height="17" viewBox="0 0 17 17"><defs><radialGradient id="dg" cx="0.4" cy="0.35" r="0.7"><stop offset="0" stop-color="#50e060"/><stop offset="1" stop-color="#15a030"/></radialGradient></defs><circle cx="8.5" cy="8.5" r="8.5" fill="url(#dg)"/></svg>
<svg class="a" style="left:353px;top:308px;" width="17" height="17" viewBox="0 0 17 17"><circle cx="8.5" cy="8.5" r="8.5" fill="url(#dg)"/></svg>
<svg class="a" style="left:353px;top:383px;" width="17" height="17" viewBox="0 0 17 17"><circle cx="8.5" cy="8.5" r="8.5" fill="url(#dg)"/></svg>
<svg class="a" style="left:353px;top:434px;" width="17" height="17" viewBox="0 0 17 17"><circle cx="8.5" cy="8.5" r="8.5" fill="url(#dg)"/></svg>
<svg class="a" style="left:353px;top:459px;" width="17" height="17" viewBox="0 0 17 17"><circle cx="8.5" cy="8.5" r="8.5" fill="url(#dg)"/></svg>
<svg class="a" style="left:353px;top:484px;" width="17" height="17" viewBox="0 0 17 17"><circle cx="8.5" cy="8.5" r="8.5" fill="url(#dg)"/></svg>
<svg class="a" style="left:353px;top:509px;" width="17" height="17" viewBox="0 0 17 17"><circle cx="8.5" cy="8.5" r="8.5" fill="url(#dg)"/></svg>
<svg class="a" style="left:353px;top:585px;" width="17" height="17" viewBox="0 0 17 17"><circle cx="8.5" cy="8.5" r="8.5" fill="url(#dg)"/></svg>
<svg class="a" style="left:380px;top:234px;" width="14" height="9" viewBox="0 0 14 9"><path d="M1 8 L7 2 L13 8" fill="none" stroke="#444" stroke-width="2"/></svg>
<svg class="a" style="left:380px;top:698px;" width="14" height="9" viewBox="0 0 14 9"><path d="M1 1 L7 7 L13 1" fill="none" stroke="#444" stroke-width="2"/></svg>
<svg class="a" style="left:380px;top:331px;" width="13" height="8" viewBox="0 0 13 8"><path d="M1 1 h11 M1 4 h11 M1 7 h11" stroke="#777" stroke-width="1"/></svg>
<svg class="a" style="left:1583px;top:354px;" width="14" height="9" viewBox="0 0 14 9"><path d="M1 8 L7 2 L13 8" fill="none" stroke="#444" stroke-width="2"/></svg>
<svg class="a" style="left:1583px;top:942px;" width="14" height="9" viewBox="0 0 14 9"><path d="M1 1 L7 7 L13 1" fill="none" stroke="#444" stroke-width="2"/></svg>
<svg class="a" style="left:1584px;top:471px;" width="13" height="8" viewBox="0 0 13 8"><path d="M1 1 h11 M1 4 h11 M1 7 h11" stroke="#777" stroke-width="1"/></svg>
<svg class="a" style="left:1612px;top:213px;" width="13" height="8" viewBox="0 0 13 8"><path d="M1 1 L6.5 6.5 L12 1" fill="none" stroke="#111" stroke-width="2.2"/></svg>
<svg class="a" style="left:1612px;top:266px;" width="13" height="8" viewBox="0 0 13 8"><path d="M1 1 L6.5 6.5 L12 1" fill="none" stroke="#111" stroke-width="2.2"/></svg>
<svg class="a" style="left:1612px;top:318px;" width="13" height="8" viewBox="0 0 13 8"><path d="M1 1 L6.5 6.5 L12 1" fill="none" stroke="#111" stroke-width="2.2"/></svg>
<svg class="a" style="left:1612px;top:371px;" width="13" height="8" viewBox="0 0 13 8"><path d="M1 1 L6.5 6.5 L12 1" fill="none" stroke="#111" stroke-width="2.2"/></svg>
<div class="a" style="left:1912px;top:233px;width:8px;height:9px;background:#f0f0f0;border:1px solid #a0a0a0;border-right:none"></div>
<div class="a" style="left:1912px;top:243px;width:8px;height:9px;background:#f0f0f0;border:1px solid #a0a0a0;border-right:none"></div>
<div class="a" style="left:1912px;top:287px;width:8px;height:9px;background:#f0f0f0;border:1px solid #a0a0a0;border-right:none"></div>
<div class="a" style="left:1912px;top:297px;width:8px;height:9px;background:#f0f0f0;border:1px solid #a0a0a0;border-right:none"></div>
<svg class="a" style="left:1612px;top:341px;" width="21" height="17" viewBox="0 0 21 17"><ellipse cx="7" cy="3" rx="6" ry="2.6" fill="#6e6e6e"/><ellipse cx="7" cy="7" rx="6" ry="2.6" fill="#7a7a7a"/><ellipse cx="7" cy="11" rx="6" ry="2.6" fill="#6e6e6e"/><ellipse cx="7" cy="14" rx="6" ry="2.6" fill="#7a7a7a"/><path d="M11 14 l3 2 l6 -6" fill="none" stroke="#8a8a8a" stroke-width="2.4"/></svg>
<svg class="a" style="left:1639px;top:344px;" width="9" height="15" viewBox="0 0 9 15"><path d="M2.5 0 h4 v5 h2.5 l-4.5 5 l-4.5 -5 h2.5 Z" fill="#6e6e6e"/><rect x="0" y="11" width="9" height="4" fill="#8a8a8a"/></svg>
<svg class="a" style="left:1660px;top:340px;" width="18" height="18" viewBox="0 0 18 18"><circle cx="6.5" cy="11" r="6" fill="#6e6e6e"/><g stroke="#8a8a8a" stroke-width="1"><path d="M13 0 v7 M9.5 3.5 h7 M10.5 1 l5 5 M15.5 1 l-5 5"/></g></svg>
<svg class="a" style="left:1692px;top:341px;" width="17" height="18" viewBox="0 0 17 18"><circle cx="6" cy="6" r="5.5" fill="#6e6e6e"/><path d="M5 11 l4 5 l7 -7" fill="none" stroke="#8a8a8a" stroke-width="2.4"/></svg>
<svg class="a" style="left:1724px;top:343px;" width="17" height="13" viewBox="0 0 17 13"><circle cx="6" cy="6.5" r="5.8" fill="#6e6e6e"/><path d="M11 1 l6 5.5 l-6 5.5 Z" fill="#8a8a8a"/></svg>
<svg class="a" style="left:1757px;top:341px;" width="14" height="17" viewBox="0 0 14 17"><path d="M0 3 l6 5 l-6 5 Z" fill="#9a9a9a"/><path d="M7 1 h6 M10 1 v15 M7 16 h6" stroke="#555" stroke-width="1.8"/></svg>
<svg class="a" style="left:1786px;top:341px;" width="18" height="18" viewBox="0 0 18 18"><path d="M6 15 Q0 9 5 4 h3" fill="none" stroke="#3a3a3a" stroke-width="2.2"/><path d="M4 12 l4 5 l-5 1 Z" fill="#222"/><path d="M10 3 h7 M10 7 h7 M10 11 h7 M10 15 h7" stroke="#8a8a8a" stroke-width="2"/></svg>
<svg class="a" style="left:1818px;top:341px;" width="18" height="18" viewBox="0 0 18 18"><path d="M6 15 Q0 9 5 4 h3" fill="none" stroke="#3a3a3a" stroke-width="2.2"/><path d="M4 12 l4 5 l-5 1 Z" fill="#222"/><path d="M10 3 h7 M10 7 h7 M10 11 h7 M10 15 h7" stroke="#8a8a8a" stroke-width="2"/></svg>
<svg class="a" style="left:1850px;top:341px;" width="18" height="18" viewBox="0 0 18 18"><path d="M6 15 Q0 9 5 4 h3" fill="none" stroke="#3a3a3a" stroke-width="2.2"/><path d="M4 12 l4 5 l-5 1 Z" fill="#222"/><path d="M10 3 h7 M10 7 h7 M10 11 h7 M10 15 h7" stroke="#8a8a8a" stroke-width="2"/></svg>
<svg class="a" style="left:1030px;top:994px;" width="19" height="21" viewBox="0 0 19 21"><rect x="0.5" y="0.5" width="15" height="19" fill="#f4f6ff" stroke="#9aa0c8"/><circle cx="8" cy="9" r="4.5" fill="none" stroke="#222" stroke-width="1.8"/><path d="M11 12 l6 6" stroke="#222" stroke-width="2.4"/></svg>
<svg class="a" style="left:1168px;top:994px;" width="22" height="21" viewBox="0 0 22 21"><path d="M1 3 h5" stroke="#111" stroke-width="1.6"/><path d="M4 0 l3 3 l-3 3" fill="none" stroke="#111" stroke-width="1.4"/><rect x="9" y="2" width="2.5" height="2.5" fill="#1a2a90"/><path d="M10 7 v9 h-2 M10 16 h3" stroke="#1a2a90" stroke-width="2.4"/><path d="M13 17 h6" stroke="#111" stroke-width="1.6"/><path d="M17 14 l3 3 l-3 3" fill="none" stroke="#111" stroke-width="1.4"/></svg>
<svg class="a" style="left:1316px;top:996px;" width="17" height="17" viewBox="0 0 17 17"><circle cx="8.5" cy="8.5" r="8" fill="#f0d820" stroke="#d0b000" stroke-width=".8"/><rect x="7.3" y="3" width="2.4" height="2.4" fill="#222"/><path d="M6.5 7 h3 v6 h1.5 M6 13 h5" stroke="#222" stroke-width="1.8" fill="none"/></svg>
<svg class="a" style="left:1350px;top:994px;" width="17" height="21" viewBox="0 0 17 21"><rect x="0.5" y="0.5" width="15" height="19" fill="#f0f2ff" stroke="#a8acd0"/><path d="M4 3 v6 q0 4 4 4 q4 0 4 -4 v-6" fill="none" stroke="#1a2060" stroke-width="1.5"/><path d="M8 13 v3" stroke="#1a2060" stroke-width="1.5"/><circle cx="11" cy="15.5" r="1.8" fill="#1a2060"/></svg>
<svg class="a" style="left:1532px;top:996px;" width="16" height="16" viewBox="0 0 16 16"><rect x="5" y="1" width="10" height="9" fill="none" stroke="#f0f0f0" stroke-width="2"/><rect x="0" y="5" width="10" height="10" fill="#f0f0f0"/></svg>
<svg class="a" style="left:1556px;top:996px;" width="16" height="14" viewBox="0 0 16 14"><rect x="0.75" y="0.75" width="14.5" height="12.5" fill="none" stroke="#e0e0e0" stroke-width="1.5"/><path d="M1 4.5 h14 M1 7.5 h14 M1 10.5 h14" stroke="#e0e0e0" stroke-width="1"/></svg>
<svg class="a" style="left:1580px;top:997px;" width="16" height="9" viewBox="0 0 16 9"><path d="M0 0 h16 l-8 9 Z" fill="#f0f0f0"/></svg>
<svg class="a" style="left:1427px;top:965px;" width="12" height="8" viewBox="0 0 12 8"><path d="M0 0 h12 l-6 7 Z" fill="#111"/></svg>
<div class="a" style="left:1422px;top:960px;width:1px;height:22px;background:#a8a8a8;"></div>
<div class="a" style="left:1466px;top:968px;width:88px;height:1px;background:#8a8a8a;"></div>
<svg class="a" style="left:1466px;top:972px;" width="90" height="6" viewBox="0 0 90 6"><rect x="0.0" y="0" width="1" height="5" fill="#777"/><rect x="6.2" y="0" width="1" height="5" fill="#777"/><rect x="12.4" y="0" width="1" height="5" fill="#777"/><rect x="18.6" y="0" width="1" height="5" fill="#777"/><rect x="24.8" y="0" width="1" height="5" fill="#777"/><rect x="31.0" y="0" width="1" height="5" fill="#777"/><rect x="37.2" y="0" width="1" height="5" fill="#777"/><rect x="43.4" y="0" width="1" height="5" fill="#777"/><rect x="49.6" y="0" width="1" height="5" fill="#777"/><rect x="55.800000000000004" y="0" width="1" height="5" fill="#777"/><rect x="62.0" y="0" width="1" height="5" fill="#777"/><rect x="68.2" y="0" width="1" height="5" fill="#777"/><rect x="74.4" y="0" width="1" height="5" fill="#777"/><rect x="80.60000000000001" y="0" width="1" height="5" fill="#777"/><rect x="86.8" y="0" width="1" height="5" fill="#777"/></svg>
<svg class="a" style="left:1467px;top:962px;" width="12" height="16" viewBox="0 0 12 16"><path d="M1 1 h10 v9 l-5 5 l-5 -5 Z" fill="#e8e8e8" stroke="#888"/></svg>
<svg class="a" style="left:0px;top:1044px;" width="8" height="16" viewBox="0 0 8 16"><path d="M8 0 v16 l-8 -8 Z" fill="#f0f0f0"/></svg>
<svg class="a" style="left:195px;top:1041px;" width="22" height="20" viewBox="0 0 22 20"><rect x="0.5" y="0.5" width="21" height="19" fill="#f0f0f8" stroke="#3a4a90"/><rect x="0.5" y="0.5" width="21" height="3" fill="#3a4a90"/><g fill="#7a7aa0"><rect x="2" y="5" width="3" height="2"/><rect x="2" y="9" width="3" height="2"/><rect x="2" y="13" width="3" height="2"/></g><g fill="#c07030"><rect x="8" y="6" width="4" height="4"/><rect x="14" y="6" width="4" height="4"/><rect x="8" y="12" width="4" height="4"/><rect x="14" y="12" width="4" height="4"/></g></svg>
<svg class="a" style="left:345px;top:1040px;" width="21" height="21" viewBox="0 0 21 21"><rect x="8" y="0" width="4" height="7" fill="#4aa8b0"/><path d="M10 7 v4 M3 14 v-3 h14 v3 M10 11 v3" stroke="#2a3a50" stroke-width="1.6" fill="none"/><rect x="1" y="13" width="4" height="7" fill="#4aa8b0"/><rect x="8" y="13" width="4" height="7" fill="#4aa8b0"/><rect x="15" y="13" width="4" height="7" fill="#4aa8b0"/></svg>
<svg class="a" style="left:497px;top:1043px;" width="20" height="15" viewBox="0 0 20 15"><rect x="4" y="1" width="13" height="13" rx="1.5" fill="#1a9a30"/><rect x="0" y="3.5" width="5" height="2.5" fill="#1a9a30"/><rect x="0" y="8.5" width="5" height="2.5" fill="#1a9a30"/><rect x="16" y="6" width="4" height="2.5" fill="#1a9a30"/><circle cx="10.5" cy="7.5" r="2.5" fill="#40d050"/></svg>
<svg class="a" style="left:649px;top:1043px;" width="20" height="15" viewBox="0 0 20 15"><rect x="4" y="1" width="13" height="13" rx="1.5" fill="#8a2ad0"/><rect x="0" y="3.5" width="5" height="2.5" fill="#8a2ad0"/><rect x="0" y="8.5" width="5" height="2.5" fill="#8a2ad0"/><rect x="16" y="6" width="4" height="2.5" fill="#8a2ad0"/><circle cx="10.5" cy="7.5" r="2.5" fill="#b060f0"/></svg>
<svg class="a" style="left:805px;top:1041px;" width="14" height="21" viewBox="0 0 14 21"><path d="M7 8 v13" stroke="#2060c0" stroke-width="3"/><path d="M2 0 q0 8 5 9 q5 -1 5 -9" fill="none" stroke="#2060c0" stroke-width="2.6"/></svg>
<svg class="a" style="left:1500px;top:1037px;" width="27" height="27" viewBox="0 0 27 27"><rect x="0" y="0" width="27" height="27" fill="#c8c8c8"/><path d="M4 5 h9 M4 9 h9 M4 13 h9" stroke="#fff" stroke-width="2.4"/><path d="M16 12 v-7 h4" fill="none" stroke="#222" stroke-width="1.6"/><path d="M18 2 l3 3 l-3 3" fill="none" stroke="#222" stroke-width="1.4"/><rect x="3" y="16" width="21" height="8" fill="none" stroke="#2a2a40" stroke-width="1.8"/><path d="M6 20 h3 M12 20 h3 M18 20 h3" stroke="#2a2a40" stroke-width="2"/></svg>
<svg class="a" style="left:1541px;top:1043px;" width="20" height="20" viewBox="0 0 20 20"><circle cx="10" cy="10" r="9.5" fill="#1818c0"/><path d="M5 10 l3.5 3.5 l7 -7" fill="none" stroke="#fff" stroke-width="2.4"/></svg>
<svg class="a" style="left:1880px;top:1046px;" width="30" height="14" viewBox="0 0 30 14"><rect x="0.0" y="0" width="3" height="14" fill="#e05010"/><rect x="4.2" y="0" width="3" height="14" fill="#e05010"/><rect x="8.4" y="0" width="3" height="14" fill="#e05010"/><rect x="12.600000000000001" y="0" width="3" height="14" fill="#e05010"/><rect x="16.8" y="0" width="3" height="14" fill="#f8f8f8"/><rect x="21.0" y="0" width="3" height="14" fill="#e05010"/><rect x="25.200000000000003" y="0" width="3" height="14" fill="#e05010"/></svg></body></html>
